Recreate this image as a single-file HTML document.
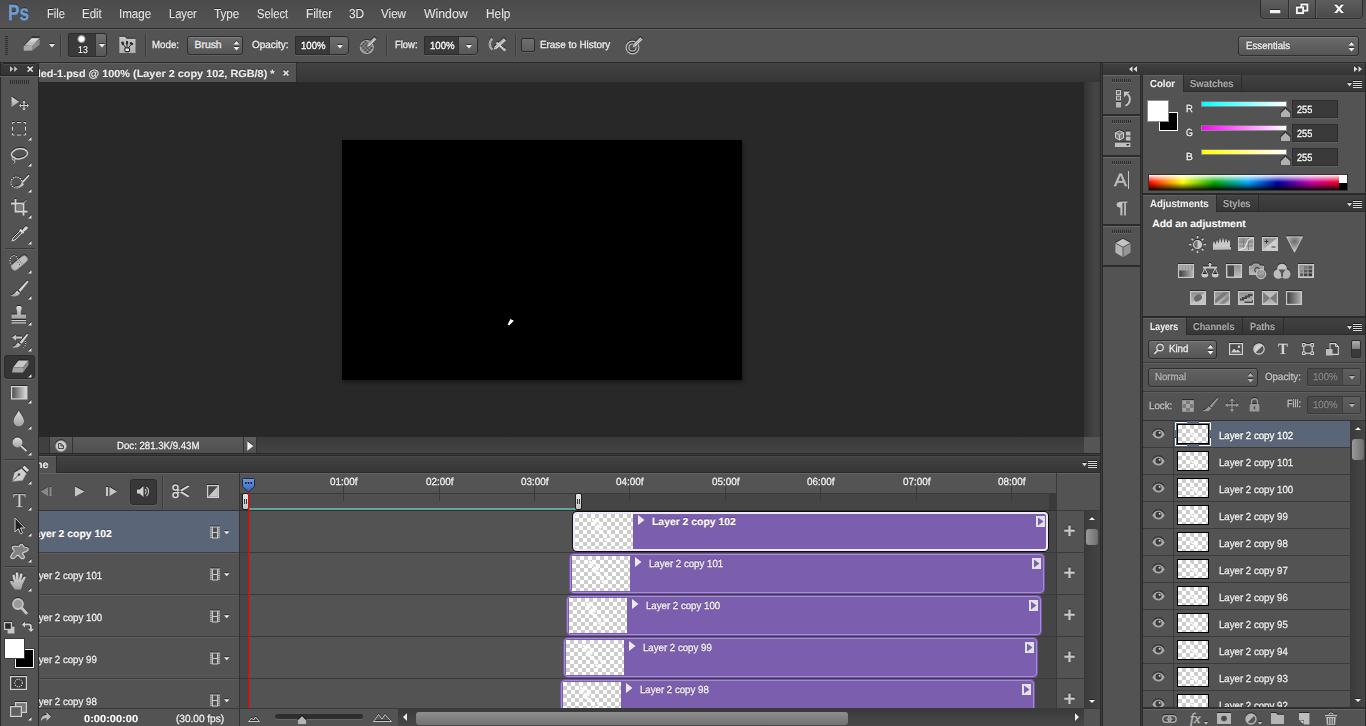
<!DOCTYPE html>
<html lang="en">
<head>
<meta charset="utf-8">
<title>Adobe Photoshop - Timeline</title>
<style>
*{box-sizing:border-box;margin:0;padding:0}
html,body{width:1366px;height:726px;overflow:hidden;background:#535353}
body{position:relative;font-family:"Liberation Sans",sans-serif;font-size:11px;line-height:13px;color:#f0f0f0;-webkit-font-smoothing:antialiased}
div,span,svg{position:absolute}
.t{white-space:nowrap;transform-origin:0 0;color:#f0f0f0;text-rendering:geometricPrecision;-webkit-text-stroke:.3px currentColor}
.t.b{-webkit-text-stroke:.12px currentColor}
.b{font-weight:bold}
svg{filter:drop-shadow(0 -1px 0 rgba(0,0,0,.5))}
.t{text-shadow:0 -1px 0 rgba(0,0,0,.45)}
.dim{color:#a6a6a6}
#menubar{left:0;top:0;width:1366px;height:28px;background:linear-gradient(#4b4b4b,#545454)}
#menubar .m{-webkit-text-stroke:.1px currentColor}
#optionsbar{left:0;top:28px;width:1366px;height:35px;background:#535353;border-top:1px solid #2c2c2c;border-bottom:1px solid #2a2a2a;box-shadow:inset 0 1px 0 #646464}
.sep{width:1px;background:#3c3c3c;box-shadow:1px 0 0 #5d5d5d}
.dd{border:1px solid #2e2e2e;border-radius:3px;background:linear-gradient(#6b6b6b,#555555);box-shadow:inset 0 1px 0 #7d7d7d,0 1px 0 #5e5e5e}
.field{background:#3a3a3a;border:1px solid #2e2e2e;box-shadow:0 1px 0 #5e5e5e}
.tabbar{background:linear-gradient(#424242,#363636)}
.tab{background:#535353;border:1px solid #2c2c2c;border-bottom:none;box-shadow:inset 0 1px 0 #646464}
.panel{background:#535353}
#toolbox{left:0;top:63px;width:39px;height:663px;background:#535353;border-right:1px solid #2a2a2a;border-left:1px solid #2a2a2a}
#doc{left:39px;top:63px;width:1061px;height:393px;background:#282828}
#timeline{left:39px;top:456px;width:1061px;height:270px;background:#535353;overflow:hidden}
#dock{left:1100px;top:63px;width:266px;height:663px;background:#2a2a2a}
</style>
</head>
<body>
<div id="menubar">
<span class="t b" style="left:7.5px;top:1px;font-size:22px;line-height:24px;transform:scaleX(0.78);color:#6e9dd4;-webkit-text-stroke:.4px #6e9dd4;">Ps</span>
<span class="t m" style="left:47.3px;top:6px;font-size:13px;line-height:15px;transform:scaleX(0.859);color:#e6e6e6;">File</span>
<span class="t m" style="left:82.4px;top:6px;font-size:13px;line-height:15px;transform:scaleX(0.884);color:#e6e6e6;">Edit</span>
<span class="t m" style="left:118.9px;top:6px;font-size:13px;line-height:15px;transform:scaleX(0.891);color:#e6e6e6;">Image</span>
<span class="t m" style="left:169.4px;top:6px;font-size:13px;line-height:15px;transform:scaleX(0.855);color:#e6e6e6;">Layer</span>
<span class="t m" style="left:214.2px;top:6px;font-size:13px;line-height:15px;transform:scaleX(0.898);color:#e6e6e6;">Type</span>
<span class="t m" style="left:257.1px;top:6px;font-size:13px;line-height:15px;transform:scaleX(0.863);color:#e6e6e6;">Select</span>
<span class="t m" style="left:306.4px;top:6px;font-size:13px;line-height:15px;transform:scaleX(0.907);color:#e6e6e6;">Filter</span>
<span class="t m" style="left:349.2px;top:6px;font-size:13px;line-height:15px;transform:scaleX(0.915);color:#e6e6e6;">3D</span>
<span class="t m" style="left:381.1px;top:6px;font-size:13px;line-height:15px;transform:scaleX(0.895);color:#e6e6e6;">View</span>
<span class="t m" style="left:424.2px;top:6px;font-size:13px;line-height:15px;transform:scaleX(0.943);color:#e6e6e6;">Window</span>
<span class="t m" style="left:485.6px;top:6px;font-size:13px;line-height:15px;transform:scaleX(0.913);color:#e6e6e6;">Help</span>
<div style="left:1260px;top:-1px;width:103px;height:20px;border:1px solid #2b2b2b;border-radius:0 0 4px 4px;background:linear-gradient(#5d5d5d,#4a4a4a);box-shadow:inset 0 -1px 0 #555,0 1px 0 #5c5c5c"></div>
<div style="left:1288px;top:0;width:1px;height:18px;background:#2e2e2e;box-shadow:1px 0 0 #626262"></div>
<div style="left:1315px;top:0;width:1px;height:18px;background:#2e2e2e;box-shadow:1px 0 0 #626262"></div>
<svg style="left:1262px;top:0px;" width="100" height="18" viewBox="0 0 100 18"><rect x="8" y="10" width="10.3" height="3.2" fill="#f4f4f4"/><rect x="39.4" y="4.4" width="6" height="6.2" fill="none" stroke="#f4f4f4" stroke-width="1.9"/><rect x="34.9" y="7.4" width="6.2" height="5.7" fill="#555" stroke="#f4f4f4" stroke-width="1.9"/><path d="M72 4.5h3l2 2.5 2-2.5h3l-3.5 4.3 3.5 4.3h-3l-2-2.5-2 2.5h-3l3.5-4.3z" fill="#f4f4f4"/></svg>
</div>
<div id="optionsbar">
<div style="left:5px;top:7px;width:3px;height:20px;background:repeating-linear-gradient(#2f2f2f 0 1px,transparent 1px 2px)"></div>
<svg style="left:22px;top:7px;" width="20" height="17" viewBox="0 0 20 17"><defs><linearGradient id="gE" x1="0" y1="0" x2="0" y2="1"><stop offset="0" stop-color="#e4e4e4"/><stop offset="1" stop-color="#b4b4b4"/></linearGradient></defs><path d="M9.8 2.1h7.7l-6.5 6.4h-7.7z" fill="url(#gE)"/><path d="M9.6 1.7h8.3" stroke="#333" stroke-width=".8"/><path d="M1.6 9.6l9.4-1.1-.6 6-8.8.3z" fill="#a9a9a9"/><path d="M11 8.5l7-5.5-.3 5.5-7.3 6z" fill="#8c8c8c"/><path d="M3.3 8.5h7.7l6.5-6.4" fill="none" stroke="#d8d8d8" stroke-width=".7"/></svg>
<svg style="left:49px;top:15px;" width="6" height="4" viewBox="0 0 6 4"><path d="M0 0h6l-3 3.5z" fill="#e6e6e6"/></svg>
<div class="sep" style="left:60px;top:5px;height:23px"></div>
<div style="left:68px;top:4px;width:39px;height:24px;border:1px solid #2b2b2b;border-radius:2px 3px 3px 2px;background:#3a3a3a;box-shadow:0 1px 0 #616161;overflow:hidden"><div style="left:26px;top:0;width:12px;height:22px;background:linear-gradient(#6e6e6e,#585858);border-left:1px solid #333"></div></div>
<div style="left:77.2px;top:5.5px;width:8.5px;height:8.5px;border-radius:50%;background:radial-gradient(circle,#fff 35%,rgba(255,255,255,.6) 55%,rgba(255,255,255,0) 74%)"></div>
<span class="t" style="left:77.6px;top:16px;font-size:10px;line-height:12px;transform:scaleX(0.881);color:#fff;-webkit-text-stroke:.1px #fff;">13</span>
<svg style="left:98.5px;top:14.5px;" width="6" height="4" viewBox="0 0 6 4"><path d="M0 0h6l-3 3.5z" fill="#f0f0f0"/></svg>
<svg style="left:118.5px;top:7px;" width="17" height="18" viewBox="0 0 17 18"><defs><linearGradient id="gF" x1="0" y1="0" x2="0" y2="1"><stop offset="0" stop-color="#c6c6c6"/><stop offset="1" stop-color="#b0b0b0"/></linearGradient></defs><path d="M.3 .8h5.7l1.6 1.9h9v14.3h-16.3z" fill="url(#gF)"/><g fill="#262626"><ellipse cx="3.7" cy="7.3" rx="1.3" ry="1.9" transform="rotate(-25 3.7 7.3)"/><ellipse cx="8" cy="6.8" rx="1.1" ry="2.1"/><ellipse cx="12.4" cy="7.6" rx="1.9" ry="1.3" transform="rotate(25 12.4 7.6)"/></g><path d="M4.3 8.5l3 3.8M8 8.5v3.5M11.8 8.8l-2.8 3.5" stroke="#262626" stroke-width="1"/><rect x="5.9" y="12" width="4.6" height="3.6" rx=".8" fill="#eee" stroke="#262626" stroke-width="1.1"/></svg>
<div class="sep" style="left:145px;top:5px;height:23px"></div>
<span class="t" style="left:152.3px;top:11px;font-size:10.4px;line-height:12px;transform:scaleX(0.936);">Mode:</span>
<div class="dd" style="left:187px;top:7px;width:56px;height:19px"></div>
<span class="t" style="left:194.5px;top:11px;font-size:10.4px;line-height:12px;">Brush</span>
<svg style="left:232.5px;top:12px;" width="7" height="10" viewBox="0 0 7 10"><path d="M0.5 3.5h6l-3-3.5z M0.5 6h6l-3 3.5z" fill="#f0f0f0"/></svg>
<span class="t" style="left:252px;top:11px;font-size:10.4px;line-height:12px;transform:scaleX(0.959);">Opacity:</span>
<div style="left:295px;top:7px;width:54px;height:19px;border:1px solid #2b2b2b;border-radius:1px 4px 4px 1px;background:#3a3a3a;box-shadow:0 1px 0 #616161;overflow:hidden"><div style="left:33px;top:0;width:20px;height:17px;background:linear-gradient(#6e6e6e,#585858);border-left:1px solid #333"></div></div><span class="t" style="left:300.5px;top:12px;font-size:10.4px;line-height:12px;transform:scaleX(0.923);color:#fff;">100%</span><svg style="left:336.5px;top:15.5px;" width="6" height="4" viewBox="0 0 6 4"><path d="M0 0h6l-3 3.5z" fill="#f0f0f0"/></svg>
<svg style="left:358px;top:6px;" width="20" height="20" viewBox="0 0 20 20"><circle cx="8.8" cy="12" r="6.5" fill="#8a8a8a" stroke="#b5b5b5" stroke-width="1.1"/><path d="M4.5 8h2v2h-2zM8.5 8h2v2h-2zM6.5 10h2v2h-2zM10.5 10h2v2h-2zM4.5 12h2v2h-2zM8.5 12h2v2h-2zM6.5 14h2v2h-2zM10.5 14h2v2h-2zM2.5 10h2v2h-2zM12.5 12h2v2h-2zM6.5 6h2v2h-2zM8.5 16h2v2h-2z" fill="#4e4e4e"/><path d="M8.5 12.5l1-3.5 6.8-7 2.3 2.3-6.8 7z" fill="#c9c9c9" stroke="#4a4a4a" stroke-width=".6"/><path d="M10.5 9.5l6-6" stroke="#8e8e8e" stroke-width="1" stroke-dasharray="1 1"/></svg>
<div class="sep" style="left:386px;top:5px;height:23px"></div>
<span class="t" style="left:395px;top:11px;font-size:10.4px;line-height:12px;transform:scaleX(0.908);">Flow:</span>
<div style="left:424px;top:7px;width:54px;height:19px;border:1px solid #2b2b2b;border-radius:1px 4px 4px 1px;background:#3a3a3a;box-shadow:0 1px 0 #616161;overflow:hidden"><div style="left:33px;top:0;width:20px;height:17px;background:linear-gradient(#6e6e6e,#585858);border-left:1px solid #333"></div></div><span class="t" style="left:429.5px;top:12px;font-size:10.4px;line-height:12px;transform:scaleX(0.923);color:#fff;">100%</span><svg style="left:465.5px;top:15.5px;" width="6" height="4" viewBox="0 0 6 4"><path d="M0 0h6l-3 3.5z" fill="#f0f0f0"/></svg>
<svg style="left:487px;top:7px;" width="21" height="17" viewBox="0 0 21 17"><path d="M5.5 2.5a7 7 0 0 0 0 11" fill="none" stroke="#a4a4a4" stroke-width="2.6"/><path d="M6 14.3l1.5-4 9.2-8.3 2.6 2.6-9.2 8.3z" fill="#cdcdcd" stroke="#444" stroke-width=".6"/><path d="M8.5 11.5l8.5-8" stroke="#7c7c7c" stroke-width="1" stroke-dasharray="1 1"/><path d="M9.5 6.5l8 7.5" stroke="#d0d0d0" stroke-width="2"/><path d="M16 12.5l2.5 2" stroke="#bdbdbd" stroke-width="2.6"/></svg>
<div class="sep" style="left:515px;top:5px;height:23px"></div>
<div style="left:521px;top:9px;width:14px;height:14px;border:1px solid #2b2b2b;border-radius:2px;background:linear-gradient(#707070,#5e5e5e);box-shadow:0 1px 0 #616161"></div>
<span class="t" style="left:540.3px;top:11px;font-size:10.4px;line-height:12px;transform:scaleX(0.949);">Erase to History</span>
<svg style="left:624px;top:6px;" width="20" height="20" viewBox="0 0 20 20"><circle cx="8.5" cy="12.5" r="6.4" fill="none" stroke="#bdbdbd" stroke-width="1.2"/><circle cx="8.5" cy="12.5" r="3.5" fill="none" stroke="#bdbdbd" stroke-width="1.2"/><path d="M8 13l1.3-3.8 7-7.2 2.6 2.6-7.2 7z" fill="#cdcdcd" stroke="#444" stroke-width=".6"/><path d="M10.5 10.5l6.5-6.5" stroke="#7c7c7c" stroke-width="1" stroke-dasharray="1 1"/></svg>
<div class="dd" style="left:1238px;top:7px;width:121px;height:20px"></div>
<span class="t" style="left:1245.8px;top:12px;font-size:10.4px;line-height:12px;transform:scaleX(0.931);">Essentials</span>
<svg style="left:1348px;top:12.5px;" width="7" height="10" viewBox="0 0 7 10"><path d="M0.5 3.5h6l-3-3.5z M0.5 6h6l-3 3.5z" fill="#f0f0f0"/></svg>
</div>
<div id="doc">
<div class="tabbar" style="left:0px;top:0px;width:1062px;height:19px;"></div>
<div class="tab" style="left:-30px;top:0;width:288px;height:19px;border-top:none;border-left:none;border-right:1px solid #2f2f2f;background:#535353;box-shadow:inset 0 1px 0 #606060"></div>
<span class="t b" style="left:-26px;top:6px;font-size:10.4px;line-height:12px;transform:scaleX(1.047);color:#ededed;">Untitled-1.psd @ 100% (Layer 2 copy 102, RGB/8) *</span>
<svg style="left:244px;top:6.5px;" width="6" height="6" viewBox="0 0 6 6"><path d="M.6 .6l4.8 4.8M5.4 .6l-4.8 4.8" stroke="#e4e4e4" stroke-width="1.5"/></svg>
<div style="left:0px;top:19px;width:1045px;height:355px;background:#282828"></div>
<div style="left:1045px;top:19px;width:16px;height:355px;background:linear-gradient(90deg,#343434,#464646 75%,#404040)"></div>
<div style="left:303px;top:77px;width:400px;height:240px;background:#000;box-shadow:1px 2px 4px rgba(0,0,0,.45)"></div>
<svg style="left:468px;top:255px;filter:none;" width="8" height="8" viewBox="0 0 8 8"><path d="M3.4 .9l3.5 1.9-4.8 4.6-1.4-.9z" fill="#fff"/></svg>
<div style="left:0px;top:374px;width:1061px;height:16px;background:linear-gradient(#3a3a3a,#434343)"></div>
<div style="left:0px;top:374px;width:10px;height:16px;background:#404040"></div>
<div style="left:10px;top:374px;width:24px;height:16px;background:linear-gradient(#5a5a5a,#4e4e4e);border-left:1px solid #333;border-right:1px solid #333"></div>
<svg style="left:16px;top:376.5px;" width="12" height="12" viewBox="0 0 12 12"><circle cx="6" cy="6" r="5.5" fill="#d0d0d0" stroke="#8a8a8a" stroke-width=".8"/><path d="M3.5 3.5h2.5l2.5 2.5v2.5h-5z" fill="none" stroke="#444" stroke-width="1"/><path d="M6 3.5v2.5h2.5" fill="none" stroke="#444" stroke-width="1"/></svg>
<div style="left:34px;top:374px;width:171px;height:16px;background:linear-gradient(#5a5a5a,#505050);border-right:1px solid #333"></div>
<span class="t" style="left:78.2px;top:378px;font-size:10.4px;line-height:12px;transform:scaleX(0.927);color:#f2f2f2;">Doc: 281.3K/9.43M</span>
<div style="left:205px;top:374px;width:13px;height:16px;background:linear-gradient(#5e5e5e,#505050);border-right:1px solid #333"></div>
<svg style="left:207.5px;top:377.5px;" width="7" height="10" viewBox="0 0 7 10"><path d="M0.3 0.3l6 4.7-6 4.7z" fill="#f4f4f4"/></svg>
<div style="left:1045px;top:374px;width:16px;height:16px;background:#555"></div>
<div style="left:0px;top:390px;width:1061px;height:3px;background:#2a2a2a"></div>
<div style="left:0px;top:391px;width:1061px;height:1px;background:#3a3a3a"></div>
</div>
<div id="timeline">
<div class="tabbar" style="left:0px;top:0px;width:1062px;height:17px;border-bottom:1px solid #2a2a2a;border-top:1px solid #484848"></div>
<div class="tab" style="left:-30px;top:0;width:48px;height:17px;border-top:none"></div>
<span class="t b" style="left:-34.2px;top:4px;font-size:10.4px;line-height:12px;transform:scaleX(1.038);color:#ededed;">Timeline</span>
<svg style="left:1043px;top:3.5px;" width="15" height="10" viewBox="0 0 15 10"><path d="M0 3h5l-2.5 3.5z" fill="#d6d6d6"/><path d="M6 1.5h9M6 3.5h9M6 5.5h9M6 7.5h9" stroke="#d6d6d6" stroke-width="1"/></svg>
<div style="left:0px;top:17px;width:1062px;height:38px;background:#535353;border-top:1px solid #636363;border-bottom:1px solid #333"></div>
<svg style="left:0px;top:27px;" width="80" height="17" viewBox="0 0 80 17"><g fill="#c6c6c6"><path d="M2 8.5l7-4.5v9z" opacity=".55"/><rect x="10.5" y="4" width="2" height="9" opacity=".55"/><path d="M36 3.5l9.5 5-9.5 5z"/><rect x="67" y="4" width="2" height="9"/><path d="M70.5 4l7.5 4.5-7.5 4.5z"/></g></svg>
<div style="left:91px;top:23px;width:27px;height:26px;background:#383838;border:1px solid #2c2c2c;border-radius:3px;box-shadow:0 1px 0 #606060"></div>
<svg style="left:97px;top:29px;" width="14" height="13" viewBox="0 0 14 13"><path d="M1 4.5h2.5l4-3.5v11l-4-3.5h-2.5z" fill="#cfcfcf"/><path d="M9 4a3.5 3.5 0 0 1 0 5M10.5 2a6 6 0 0 1 0 9" fill="none" stroke="#cfcfcf" stroke-width="1.1"/></svg>
<div class="sep" style="left:123px;top:20px;height:33px"></div>
<svg style="left:132.5px;top:28px;" width="18" height="15" viewBox="0 0 18 15"><g fill="none" stroke="#d4d4d4" stroke-width="1.6"><circle cx="3.5" cy="3.5" r="2.5"/><circle cx="3.5" cy="11" r="2.5"/></g><path d="M5.5 4.5l12 7.5-1.5 1.3-11.5-6.8zM5.5 10l12-7.5-1.5-1.3-11.5 6.8z" fill="#d4d4d4"/></svg>
<svg style="left:168px;top:28.5px;" width="12" height="13" viewBox="0 0 12 13"><rect x=".6" y=".6" width="10.8" height="11.8" fill="#4a4a4a" stroke="#d0d0d0" stroke-width="1.2"/><path d="M1.2 11.8l9.6-10.6v10.6z" fill="#c8c8c8"/></svg>
<div style="left:200px;top:17px;width:1px;height:253px;background:#333"></div>
<div style="left:201px;top:17px;width:817px;height:21px;background:#545454;border-top:1px solid #636363"></div>
<div style="left:201px;top:37px;width:817px;height:18px;background:#454545;border-top:1px solid #3b3b3b"></div>
<div style="left:209px;top:38px;width:329px;height:17px;background:#4f4f4f"></div>
<div style="left:1010px;top:38px;width:8px;height:17px;background:#3a3a3a"></div>
<span class="t" style="left:291.3px;top:21px;font-size:10.4px;line-height:12px;transform:scaleX(0.953);color:#f2f2f2;">01:00f</span>
<div style="left:304px;top:30px;width:1px;height:15px;background:#3b3b3b"></div>
<span class="t" style="left:387.3px;top:21px;font-size:10.4px;line-height:12px;transform:scaleX(0.953);color:#f2f2f2;">02:00f</span>
<div style="left:400px;top:30px;width:1px;height:15px;background:#3b3b3b"></div>
<span class="t" style="left:482.3px;top:21px;font-size:10.4px;line-height:12px;transform:scaleX(0.953);color:#f2f2f2;">03:00f</span>
<div style="left:495px;top:30px;width:1px;height:15px;background:#3b3b3b"></div>
<span class="t" style="left:577.3px;top:21px;font-size:10.4px;line-height:12px;transform:scaleX(0.953);color:#f2f2f2;">04:00f</span>
<div style="left:590px;top:30px;width:1px;height:15px;background:#3b3b3b"></div>
<span class="t" style="left:673.3px;top:21px;font-size:10.4px;line-height:12px;transform:scaleX(0.953);color:#f2f2f2;">05:00f</span>
<div style="left:686px;top:30px;width:1px;height:15px;background:#3b3b3b"></div>
<span class="t" style="left:768.3px;top:21px;font-size:10.4px;line-height:12px;transform:scaleX(0.953);color:#f2f2f2;">06:00f</span>
<div style="left:781px;top:30px;width:1px;height:15px;background:#3b3b3b"></div>
<span class="t" style="left:864.3px;top:21px;font-size:10.4px;line-height:12px;transform:scaleX(0.953);color:#f2f2f2;">07:00f</span>
<div style="left:877px;top:30px;width:1px;height:15px;background:#3b3b3b"></div>
<span class="t" style="left:959.3px;top:21px;font-size:10.4px;line-height:12px;transform:scaleX(0.953);color:#f2f2f2;">08:00f</span>
<div style="left:972px;top:30px;width:1px;height:15px;background:#3b3b3b"></div>
<div style="left:201px;top:54px;width:817px;height:1px;background:#2e2e2e"></div>
<div style="left:209px;top:52px;width:329px;height:2px;background:#5fa79b"></div>
<div style="left:203px;top:37px;width:7px;height:17px;background:linear-gradient(#e6e6e6,#c4c4c4);border:1px solid #1e1e1e;border-radius:2px"></div>
<div style="left:205px;top:43px;width:3px;height:5px;border-left:1px solid #333;border-right:1px solid #333"></div>
<div style="left:536px;top:37px;width:7px;height:17px;background:linear-gradient(#e6e6e6,#c4c4c4);border:1px solid #1e1e1e;border-radius:2px"></div>
<div style="left:538px;top:43px;width:3px;height:5px;border-left:1px solid #333;border-right:1px solid #333"></div>
<div style="left:1017px;top:17px;width:1px;height:236px;background:#3a3a3a"></div>
<div style="left:1018px;top:17px;width:44px;height:38px;background:#535353;border-top:1px solid #636363;border-bottom:1px solid #3a3a3a"></div>
<div style="left:0px;top:55px;width:200px;height:41px;background:#5a6678"></div>
<div style="left:0px;top:96px;width:200px;height:1px;background:#3c3c3c"></div>
<span class="t b" style="left:-11px;top:73px;font-size:10.4px;line-height:12px;color:#fff;">Layer 2 copy 102</span>
<svg style="left:171px;top:69.5px;" width="20" height="13" viewBox="0 0 20 13"><rect x="2.5" y="1" width="5" height="11" fill="#4e4e4e" stroke="#c8c8c8" stroke-width="1"/><path d="M1 .5v12M9 .5v12" stroke="#c8c8c8" stroke-width="2" stroke-dasharray="1.2 .8"/><path d="M2.5 6.5h5" stroke="#c8c8c8" stroke-width="1"/><path d="M14 5.3h5.5l-2.75 3z" fill="#f0f0f0"/></svg>
<div style="left:201px;top:55px;width:8px;height:42px;background:#474747"></div>
<div style="left:209px;top:55px;width:808px;height:42px;background:#535353"></div>
<div style="left:201px;top:96px;width:817px;height:1px;background:#3a3a3a"></div>
<div style="left:1009px;top:55px;width:8px;height:41px;background:#454545"></div>
<div style="left:534px;top:56px;width:475px;height:39px;background:#7c5eae;border:2px solid #efe9fb;border-radius:4px;box-shadow:0 0 0 1px #0c0c0c;overflow:hidden"><div style="left:0px;top:0px;width:58px;height:35px;background-color:#fff;background-image:linear-gradient(45deg,#ccc 25%,transparent 25%,transparent 75%,#ccc 75%),linear-gradient(45deg,#ccc 25%,transparent 25%,transparent 75%,#ccc 75%);background-size:8px 8px;background-position:0 0,4px 4px;"></div><svg style="left:10px;top:2px;filter:none;" width="40" height="32" viewBox="0 0 40 32"><g fill="#fff" opacity=".92"><path d="M8 2l4 5-1.5 1.5-4-4.5zM14 4l3 6-2 1-2.5-6zM10 11l8 4-1.5 2-7.5-4zM17 14l5 7-2 1.5-4.5-7zM20 22l4 3-1.5 1.5-3.5-3zM24 16l3 5-1.5 1-2.5-5zM12 8l5 3-1 2-5-3z"/></g></svg></div>
<svg style="left:599px;top:58.8px;filter:none;" width="7" height="10" viewBox="0 0 7 10"><path d="M0 0l6.5 5-6.5 5z" fill="#ececec"/></svg>
<span class="t b" style="left:613px;top:61px;font-size:10.4px;line-height:12px;color:#fff;">Layer 2 copy 102</span>
<svg style="left:997px;top:60px;filter:none;" width="9" height="11" viewBox="0 0 9 11"><rect width="9" height="11" fill="#e2e2e2"/><path d="M2 1.5l5.5 4-5.5 4z" fill="#7c5eae"/></svg>
<div style="left:1018px;top:55px;width:27px;height:41px;background:#535353"></div>
<div style="left:1018px;top:96px;width:27px;height:1px;background:#3a3a3a"></div>
<svg style="left:1025px;top:69px;" width="11" height="11" viewBox="0 0 11 11"><path d="M5.5 .5v10.5M.3 5.7h10.4" stroke="#c8c8c8" stroke-width="2.3"/></svg>
<div style="left:0px;top:97px;width:200px;height:41px;background:#535353"></div>
<div style="left:0px;top:138px;width:200px;height:1px;background:#3c3c3c"></div>
<div style="left:0px;top:97px;width:200px;height:1px;background:#5f5f5f"></div>
<span class="t" style="left:-11px;top:115px;font-size:10.4px;line-height:12px;transform:scaleX(0.93);color:#f0f0f0;">Layer 2 copy 101</span>
<svg style="left:171px;top:111.5px;" width="20" height="13" viewBox="0 0 20 13"><rect x="2.5" y="1" width="5" height="11" fill="#4e4e4e" stroke="#c8c8c8" stroke-width="1"/><path d="M1 .5v12M9 .5v12" stroke="#c8c8c8" stroke-width="2" stroke-dasharray="1.2 .8"/><path d="M2.5 6.5h5" stroke="#c8c8c8" stroke-width="1"/><path d="M14 5.3h5.5l-2.75 3z" fill="#f0f0f0"/></svg>
<div style="left:201px;top:97px;width:8px;height:42px;background:#474747"></div>
<div style="left:209px;top:97px;width:808px;height:42px;background:#535353"></div>
<div style="left:201px;top:138px;width:817px;height:1px;background:#3a3a3a"></div>
<div style="left:1005px;top:97px;width:12px;height:41px;background:#454545"></div>
<div style="left:531px;top:98px;width:474px;height:39px;background:#7c5eae;border:1px solid #a58dd6;border-radius:4px;box-shadow:0 0 0 1px #7556a8;overflow:hidden"><div style="left:1px;top:1px;width:58px;height:35px;background-color:#fff;background-image:linear-gradient(45deg,#ccc 25%,transparent 25%,transparent 75%,#ccc 75%),linear-gradient(45deg,#ccc 25%,transparent 25%,transparent 75%,#ccc 75%);background-size:8px 8px;background-position:0 0,4px 4px;"></div><svg style="left:11px;top:3px;filter:none;" width="40" height="32" viewBox="0 0 40 32"><g fill="#fff" opacity=".92"><path d="M8 2l4 5-1.5 1.5-4-4.5zM14 4l3 6-2 1-2.5-6zM10 11l8 4-1.5 2-7.5-4zM17 14l5 7-2 1.5-4.5-7zM20 22l4 3-1.5 1.5-3.5-3zM24 16l3 5-1.5 1-2.5-5zM12 8l5 3-1 2-5-3z"/></g></svg></div>
<svg style="left:596px;top:100.8px;filter:none;" width="7" height="10" viewBox="0 0 7 10"><path d="M0 0l6.5 5-6.5 5z" fill="#ececec"/></svg>
<span class="t" style="left:610px;top:103px;font-size:10.4px;line-height:12px;transform:scaleX(0.93);color:#f4f4f4;">Layer 2 copy 101</span>
<svg style="left:993px;top:102px;filter:none;" width="9" height="11" viewBox="0 0 9 11"><rect width="9" height="11" fill="#e2e2e2"/><path d="M2 1.5l5.5 4-5.5 4z" fill="#7c5eae"/></svg>
<div style="left:1018px;top:97px;width:27px;height:41px;background:#535353"></div>
<div style="left:1018px;top:138px;width:27px;height:1px;background:#3a3a3a"></div>
<svg style="left:1025px;top:111px;" width="11" height="11" viewBox="0 0 11 11"><path d="M5.5 .5v10.5M.3 5.7h10.4" stroke="#c8c8c8" stroke-width="2.3"/></svg>
<div style="left:0px;top:139px;width:200px;height:41px;background:#535353"></div>
<div style="left:0px;top:180px;width:200px;height:1px;background:#3c3c3c"></div>
<div style="left:0px;top:139px;width:200px;height:1px;background:#5f5f5f"></div>
<span class="t" style="left:-11px;top:157px;font-size:10.4px;line-height:12px;transform:scaleX(0.93);color:#f0f0f0;">Layer 2 copy 100</span>
<svg style="left:171px;top:153.5px;" width="20" height="13" viewBox="0 0 20 13"><rect x="2.5" y="1" width="5" height="11" fill="#4e4e4e" stroke="#c8c8c8" stroke-width="1"/><path d="M1 .5v12M9 .5v12" stroke="#c8c8c8" stroke-width="2" stroke-dasharray="1.2 .8"/><path d="M2.5 6.5h5" stroke="#c8c8c8" stroke-width="1"/><path d="M14 5.3h5.5l-2.75 3z" fill="#f0f0f0"/></svg>
<div style="left:201px;top:139px;width:8px;height:42px;background:#474747"></div>
<div style="left:209px;top:139px;width:808px;height:42px;background:#535353"></div>
<div style="left:201px;top:180px;width:817px;height:1px;background:#3a3a3a"></div>
<div style="left:1002px;top:139px;width:15px;height:41px;background:#454545"></div>
<div style="left:528px;top:140px;width:474px;height:39px;background:#7c5eae;border:1px solid #a58dd6;border-radius:4px;box-shadow:0 0 0 1px #7556a8;overflow:hidden"><div style="left:1px;top:1px;width:58px;height:35px;background-color:#fff;background-image:linear-gradient(45deg,#ccc 25%,transparent 25%,transparent 75%,#ccc 75%),linear-gradient(45deg,#ccc 25%,transparent 25%,transparent 75%,#ccc 75%);background-size:8px 8px;background-position:0 0,4px 4px;"></div><svg style="left:11px;top:3px;filter:none;" width="40" height="32" viewBox="0 0 40 32"><g fill="#fff" opacity=".92"><path d="M8 2l4 5-1.5 1.5-4-4.5zM14 4l3 6-2 1-2.5-6zM10 11l8 4-1.5 2-7.5-4zM17 14l5 7-2 1.5-4.5-7zM20 22l4 3-1.5 1.5-3.5-3zM24 16l3 5-1.5 1-2.5-5zM12 8l5 3-1 2-5-3z"/></g></svg></div>
<svg style="left:593px;top:142.8px;filter:none;" width="7" height="10" viewBox="0 0 7 10"><path d="M0 0l6.5 5-6.5 5z" fill="#ececec"/></svg>
<span class="t" style="left:607px;top:145px;font-size:10.4px;line-height:12px;transform:scaleX(0.93);color:#f4f4f4;">Layer 2 copy 100</span>
<svg style="left:990px;top:144px;filter:none;" width="9" height="11" viewBox="0 0 9 11"><rect width="9" height="11" fill="#e2e2e2"/><path d="M2 1.5l5.5 4-5.5 4z" fill="#7c5eae"/></svg>
<div style="left:1018px;top:139px;width:27px;height:41px;background:#535353"></div>
<div style="left:1018px;top:180px;width:27px;height:1px;background:#3a3a3a"></div>
<svg style="left:1025px;top:153px;" width="11" height="11" viewBox="0 0 11 11"><path d="M5.5 .5v10.5M.3 5.7h10.4" stroke="#c8c8c8" stroke-width="2.3"/></svg>
<div style="left:0px;top:181px;width:200px;height:41px;background:#535353"></div>
<div style="left:0px;top:222px;width:200px;height:1px;background:#3c3c3c"></div>
<div style="left:0px;top:181px;width:200px;height:1px;background:#5f5f5f"></div>
<span class="t" style="left:-11px;top:199px;font-size:10.4px;line-height:12px;transform:scaleX(0.93);color:#f0f0f0;">Layer 2 copy 99</span>
<svg style="left:171px;top:195.5px;" width="20" height="13" viewBox="0 0 20 13"><rect x="2.5" y="1" width="5" height="11" fill="#4e4e4e" stroke="#c8c8c8" stroke-width="1"/><path d="M1 .5v12M9 .5v12" stroke="#c8c8c8" stroke-width="2" stroke-dasharray="1.2 .8"/><path d="M2.5 6.5h5" stroke="#c8c8c8" stroke-width="1"/><path d="M14 5.3h5.5l-2.75 3z" fill="#f0f0f0"/></svg>
<div style="left:201px;top:181px;width:8px;height:42px;background:#474747"></div>
<div style="left:209px;top:181px;width:808px;height:42px;background:#535353"></div>
<div style="left:201px;top:222px;width:817px;height:1px;background:#3a3a3a"></div>
<div style="left:998px;top:181px;width:19px;height:41px;background:#454545"></div>
<div style="left:525px;top:182px;width:473px;height:39px;background:#7c5eae;border:1px solid #a58dd6;border-radius:4px;box-shadow:0 0 0 1px #7556a8;overflow:hidden"><div style="left:1px;top:1px;width:58px;height:35px;background-color:#fff;background-image:linear-gradient(45deg,#ccc 25%,transparent 25%,transparent 75%,#ccc 75%),linear-gradient(45deg,#ccc 25%,transparent 25%,transparent 75%,#ccc 75%);background-size:8px 8px;background-position:0 0,4px 4px;"></div><svg style="left:11px;top:3px;filter:none;" width="40" height="32" viewBox="0 0 40 32"><g fill="#fff" opacity=".92"><path d="M8 2l4 5-1.5 1.5-4-4.5zM14 4l3 6-2 1-2.5-6zM10 11l8 4-1.5 2-7.5-4zM17 14l5 7-2 1.5-4.5-7zM20 22l4 3-1.5 1.5-3.5-3zM24 16l3 5-1.5 1-2.5-5zM12 8l5 3-1 2-5-3z"/></g></svg></div>
<svg style="left:590px;top:184.8px;filter:none;" width="7" height="10" viewBox="0 0 7 10"><path d="M0 0l6.5 5-6.5 5z" fill="#ececec"/></svg>
<span class="t" style="left:604px;top:187px;font-size:10.4px;line-height:12px;transform:scaleX(0.93);color:#f4f4f4;">Layer 2 copy 99</span>
<svg style="left:986px;top:186px;filter:none;" width="9" height="11" viewBox="0 0 9 11"><rect width="9" height="11" fill="#e2e2e2"/><path d="M2 1.5l5.5 4-5.5 4z" fill="#7c5eae"/></svg>
<div style="left:1018px;top:181px;width:27px;height:41px;background:#535353"></div>
<div style="left:1018px;top:222px;width:27px;height:1px;background:#3a3a3a"></div>
<svg style="left:1025px;top:195px;" width="11" height="11" viewBox="0 0 11 11"><path d="M5.5 .5v10.5M.3 5.7h10.4" stroke="#c8c8c8" stroke-width="2.3"/></svg>
<div style="left:0px;top:223px;width:200px;height:29px;background:#535353"></div>
<div style="left:0px;top:264px;width:200px;height:1px;background:#3c3c3c"></div>
<div style="left:0px;top:223px;width:200px;height:1px;background:#5f5f5f"></div>
<span class="t" style="left:-11px;top:241px;font-size:10.4px;line-height:12px;transform:scaleX(0.93);color:#f0f0f0;">Layer 2 copy 98</span>
<svg style="left:171px;top:237.5px;" width="20" height="13" viewBox="0 0 20 13"><rect x="2.5" y="1" width="5" height="11" fill="#4e4e4e" stroke="#c8c8c8" stroke-width="1"/><path d="M1 .5v12M9 .5v12" stroke="#c8c8c8" stroke-width="2" stroke-dasharray="1.2 .8"/><path d="M2.5 6.5h5" stroke="#c8c8c8" stroke-width="1"/><path d="M14 5.3h5.5l-2.75 3z" fill="#f0f0f0"/></svg>
<div style="left:201px;top:223px;width:8px;height:30px;background:#474747"></div>
<div style="left:209px;top:223px;width:808px;height:30px;background:#535353"></div>
<div style="left:201px;top:264px;width:817px;height:1px;background:#3a3a3a"></div>
<div style="left:995px;top:223px;width:22px;height:29px;background:#454545"></div>
<div style="left:522px;top:224px;width:473px;height:39px;background:#7c5eae;border:1px solid #a58dd6;border-radius:4px;box-shadow:0 0 0 1px #7556a8;overflow:hidden"><div style="left:1px;top:1px;width:58px;height:35px;background-color:#fff;background-image:linear-gradient(45deg,#ccc 25%,transparent 25%,transparent 75%,#ccc 75%),linear-gradient(45deg,#ccc 25%,transparent 25%,transparent 75%,#ccc 75%);background-size:8px 8px;background-position:0 0,4px 4px;"></div><svg style="left:11px;top:3px;filter:none;" width="40" height="32" viewBox="0 0 40 32"><g fill="#fff" opacity=".92"><path d="M8 2l4 5-1.5 1.5-4-4.5zM14 4l3 6-2 1-2.5-6zM10 11l8 4-1.5 2-7.5-4zM17 14l5 7-2 1.5-4.5-7zM20 22l4 3-1.5 1.5-3.5-3zM24 16l3 5-1.5 1-2.5-5zM12 8l5 3-1 2-5-3z"/></g></svg></div>
<svg style="left:587px;top:226.8px;filter:none;" width="7" height="10" viewBox="0 0 7 10"><path d="M0 0l6.5 5-6.5 5z" fill="#ececec"/></svg>
<span class="t" style="left:601px;top:229px;font-size:10.4px;line-height:12px;transform:scaleX(0.93);color:#f4f4f4;">Layer 2 copy 98</span>
<svg style="left:983px;top:228px;filter:none;" width="9" height="11" viewBox="0 0 9 11"><rect width="9" height="11" fill="#e2e2e2"/><path d="M2 1.5l5.5 4-5.5 4z" fill="#7c5eae"/></svg>
<div style="left:1018px;top:223px;width:27px;height:29px;background:#535353"></div>
<div style="left:1018px;top:264px;width:27px;height:1px;background:#3a3a3a"></div>
<svg style="left:1025px;top:237px;" width="11" height="11" viewBox="0 0 11 11"><path d="M5.5 .5v10.5M.3 5.7h10.4" stroke="#c8c8c8" stroke-width="2.3"/></svg>
<div style="left:209px;top:35px;width:1px;height:218px;background:#f40000;box-shadow:1px 0 0 rgba(255,0,0,.28)"></div>
<svg style="left:203px;top:21.5px;filter:none;" width="13" height="15" viewBox="0 0 13 15"><defs><linearGradient id="gP" x1="0" y1="0" x2="0" y2="1"><stop offset="0" stop-color="#6f9be0"/><stop offset="1" stop-color="#3a63b4"/></linearGradient></defs><path d="M1.5 .5h10a1 1 0 0 1 1 1v7l-6 5.5-6-5.5v-7a1 1 0 0 1 1-1z" fill="url(#gP)" stroke="#1c2a4a" stroke-width="1"/><path d="M3 4h1.5v2h-1.5zM5.75 4h1.5v2h-1.5zM8.5 4h1.5v2h-1.5z" fill="#14203c"/></svg>
<div style="left:1045px;top:55px;width:16px;height:198px;background:linear-gradient(90deg,#3a3a3a,#444)"></div>
<svg style="left:1050px;top:61px;" width="6" height="3" viewBox="0 0 6 3"><path d="M0 3h6l-3-3z" fill="#f4f4f4"/></svg>
<svg style="left:1050px;top:244px;" width="6" height="3" viewBox="0 0 6 3"><path d="M0 0h6l-3 3z" fill="#f4f4f4"/></svg>
<div style="left:1047px;top:73px;width:12px;height:16px;background:linear-gradient(90deg,#999,#6e6e6e);border-radius:3px"></div>
<div style="left:0px;top:252px;width:1062px;height:1px;background:#3a3a3a"></div>
<div style="left:0px;top:253px;width:1062px;height:17px;background:#535353"></div>
<svg style="left:1px;top:255px;" width="11" height="11" viewBox="0 0 11 11"><path d="M1 10c0-4 2-6 5.5-6v-3l4.5 4.5-4.5 4.5v-3c-2.5 0-4 1-5.5 3z" fill="#bdbdbd"/></svg>
<span class="t b" style="left:44.5px;top:258px;font-size:10.4px;line-height:12px;transform:scaleX(1.064);color:#fff;">0:00:00:00</span>
<span class="t" style="left:137px;top:258px;font-size:10.4px;line-height:12px;transform:scaleX(0.968);color:#f0f0f0;">(30.00 fps)</span>
<div style="left:200px;top:253px;width:1px;height:17px;background:#333"></div>
<svg style="left:209px;top:257px;" width="12" height="9" viewBox="0 0 12 9"><path d="M.5 8.5l3-3.5 2 2 2-3 4 4.5z" fill="none" stroke="#c8c8c8" stroke-width="1"/></svg>
<div style="left:236px;top:258px;width:88px;height:5px;background:#2e2e2e;border-radius:3px;box-shadow:0 1px 0 #686868"></div>
<svg style="left:257.5px;top:259.5px;" width="10" height="9" viewBox="0 0 10 9"><path d="M5 0l4.5 4.5v4h-9v-4z" fill="#b4b4b4" stroke="#444" stroke-width=".6"/></svg>
<svg style="left:334px;top:257px;" width="19" height="9" viewBox="0 0 19 9"><path d="M.5 8.5l5-7 3.5 4.5 3-4.5 6.5 7z" fill="none" stroke="#c8c8c8" stroke-width="1"/></svg>
<div style="left:359px;top:253px;width:686px;height:17px;background:linear-gradient(#3a3a3a,#484848)"></div>
<svg style="left:364px;top:257px;" width="4" height="8" viewBox="0 0 4 8"><path d="M4 0v8l-4-4z" fill="#f0f0f0"/></svg>
<svg style="left:1036px;top:257px;" width="4" height="8" viewBox="0 0 4 8"><path d="M0 0v8l4-4z" fill="#f0f0f0"/></svg>
<div style="left:377px;top:256px;width:432px;height:13px;background:linear-gradient(#8e8e8e,#727272);border-radius:3px"></div>
</div>
<div id="dock">
<div style="left:1px;top:0px;width:1px;height:663px;background:#3c3c3c"></div>
<div style="left:3px;top:0px;width:262px;height:12px;background:linear-gradient(#404040,#343434);border-top:1px solid #4a4a4a"></div>
<svg style="left:28.5px;top:2.5px;" width="8" height="6" viewBox="0 0 8 6"><path d="M3.5 0v6l-3.5-3zM8 0v6l-3.5-3z" fill="#dcdcdc"/></svg>
<svg style="left:254px;top:3px;" width="8" height="6" viewBox="0 0 8 6"><path d="M0 0v6l3.5-3zM4.5 0v6l3.5-3z" fill="#dcdcdc"/></svg>
<div style="left:3px;top:12px;width:37px;height:651px;background:#535353"></div>
<div style="left:40px;top:12px;width:3px;height:651px;background:#2b2b2b"></div>
<div style="left:41px;top:12px;width:1px;height:651px;background:#3a3a3a"></div>
<div style="left:3px;top:12px;width:37px;height:1px;background:#676767"></div>
<div style="left:3px;top:51px;width:37px;height:2px;background:#2c2c2c"></div>
<div style="left:12px;top:16px;width:19px;height:3px;background:repeating-linear-gradient(90deg,#2f2f2f 0 1px,transparent 1px 2px)"></div>
<div style="left:12px;top:19px;width:19px;height:1px;background:repeating-linear-gradient(90deg,#6c6c6c 0 1px,transparent 1px 2px)"></div>
<div style="left:3px;top:53px;width:37px;height:1px;background:#676767"></div>
<div style="left:3px;top:92px;width:37px;height:2px;background:#2c2c2c"></div>
<div style="left:12px;top:57px;width:19px;height:3px;background:repeating-linear-gradient(90deg,#2f2f2f 0 1px,transparent 1px 2px)"></div>
<div style="left:12px;top:60px;width:19px;height:1px;background:repeating-linear-gradient(90deg,#6c6c6c 0 1px,transparent 1px 2px)"></div>
<div style="left:3px;top:94px;width:37px;height:1px;background:#676767"></div>
<div style="left:3px;top:161px;width:37px;height:2px;background:#2c2c2c"></div>
<div style="left:12px;top:98px;width:19px;height:3px;background:repeating-linear-gradient(90deg,#2f2f2f 0 1px,transparent 1px 2px)"></div>
<div style="left:12px;top:101px;width:19px;height:1px;background:repeating-linear-gradient(90deg,#6c6c6c 0 1px,transparent 1px 2px)"></div>
<div style="left:3px;top:163px;width:37px;height:1px;background:#676767"></div>
<div style="left:3px;top:202px;width:37px;height:2px;background:#2c2c2c"></div>
<div style="left:12px;top:167px;width:19px;height:3px;background:repeating-linear-gradient(90deg,#2f2f2f 0 1px,transparent 1px 2px)"></div>
<div style="left:12px;top:170px;width:19px;height:1px;background:repeating-linear-gradient(90deg,#6c6c6c 0 1px,transparent 1px 2px)"></div>
<svg style="left:16px;top:26.5px;" width="16" height="18" viewBox="0 0 16 18"><rect x=".5" y=".5" width="4" height="4" fill="#6a6a6a" stroke="#c8c8c8"/><rect x=".5" y="6" width="4" height="4" fill="#6a6a6a" stroke="#c8c8c8"/><rect y="12" width="5" height="5.5" fill="#b4b4b4"/><path d="M8 1.5h6l-6 5.8z" fill="#c6c6c6"/><path d="M11.5 4c3.5 3 3.5 8.5-2 11.8" fill="none" stroke="#c6c6c6" stroke-width="1.9"/></svg>
<svg style="left:15px;top:66.5px;" width="16" height="18" viewBox="0 0 16 18"><path d="M4.5 .8l4 1.8v5.2l-4 2.2-4-2.2v-5.2z" fill="#7a7a7a" stroke="#d0d0d0" stroke-width="1"/><path d="M.5 2.6l4 2.2 4-2.2M4.5 4.8v5.2" fill="none" stroke="#d0d0d0" stroke-width="1"/><rect x="11" y="1.5" width="4.5" height="4" fill="#c0c0c0"/><rect x="11" y="6.5" width="4.5" height="4" fill="#c0c0c0"/><rect x="0" y="12.5" width="15.5" height="4.5" fill="#c0c0c0"/><path d="M11 14h3.5l-1.75 2z" fill="#2a2a2a"/></svg>
<span class="t" style="left:14.4px;top:107px;font-size:18px;line-height:20px;transform:scaleX(1.083);color:#bdbdbd;-webkit-text-stroke:.5px #bdbdbd;">A</span>
<div style="left:28px;top:108px;width:1px;height:18px;background:#c4c4c4"></div>
<span class="t" style="left:15.5px;top:136px;font-size:16.5px;line-height:18px;transform:scaleX(1.354);color:#c4c4c4;-webkit-text-stroke:.4px #c4c4c4;">¶</span>
<svg style="left:14px;top:175px;" width="18" height="20" viewBox="0 0 18 20"><path d="M9 .8l7.7 4.2-7.7 4.3-7.7-4.3z" fill="#c4c4c4"/><path d="M1.3 5l7.7 4.3v9.9l-7.7-4.7z" fill="#b4b4b4"/><path d="M16.7 5l-7.7 4.3v9.9l7.7-4.7z" fill="#969696"/><path d="M1.3 5l7.7 4.3 7.7-4.3M9 9.3v9.9" fill="none" stroke="#5a5a5a" stroke-width="1"/></svg>
<div class="panel" style="left:43px;top:12px;width:222px;height:118px;"></div>
<div class="tabbar" style="left:43px;top:12px;width:222px;height:17px;border-bottom:1px solid #2c2c2c"></div><div style="left:43px;top:12px;width:41px;height:17px;background:#535353;border-right:1px solid #2c2c2c;box-shadow:inset 0 1px 0 #626262"></div><span class="t b" style="left:50px;top:16px;font-size:10.4px;line-height:12px;transform:scaleX(0.923);color:#f0f0f0;">Color</span><div style="left:84px;top:12px;width:58px;height:16px;border-right:1px solid #2c2c2c;box-shadow:inset 0 1px 0 #4a4a4a"></div><span class="t b" style="left:90.2px;top:16px;font-size:10.4px;line-height:12px;transform:scaleX(0.909);color:#a9a9a9;">Swatches</span><svg style="left:247px;top:17px;" width="15" height="9" viewBox="0 0 15 9"><path d="M0 3h5l-2.5 3.5z" fill="#d6d6d6"/><path d="M6 1.5h9M6 3.5h9M6 5.5h9M6 7.5h9" stroke="#d6d6d6" stroke-width="1"/></svg>
<div style="left:59px;top:49px;width:19px;height:19px;background:#000;border:1px solid #fff"></div>
<div style="left:47px;top:37px;width:22px;height:22px;background:#fff;border:1px solid #8c8c8c;box-shadow:inset 0 0 0 1px #fff"></div>
<span class="t" style="left:86.1px;top:41px;font-size:10.4px;line-height:12px;transform:scaleX(0.908);color:#f0f0f0;">R</span>
<div style="left:101px;top:38px;width:86px;height:6px;background:linear-gradient(90deg,#00ffff,#fff);border:1px solid #8a8a8a;border-top-color:#777"></div>
<svg style="left:180px;top:44.5px;" width="11" height="10" viewBox="0 0 11 10"><path d="M5.5 .4l5 4.6v4.5h-10v-4.5z" fill="#b0b0b0" stroke="#3c3c3c" stroke-width=".7"/></svg>
<div style="left:192px;top:37px;width:46px;height:18px;background:#3a3a3a;border:1px solid #2e2e2e;box-shadow:0 1px 0 #606060"></div>
<span class="t" style="left:197px;top:42px;font-size:10.4px;line-height:12px;transform:scaleX(0.878);color:#fff;">255</span>
<span class="t" style="left:86.1px;top:65px;font-size:10.4px;line-height:12px;transform:scaleX(0.843);color:#f0f0f0;">G</span>
<div style="left:101px;top:62px;width:86px;height:6px;background:linear-gradient(90deg,#ff00ff,#fff);border:1px solid #8a8a8a;border-top-color:#777"></div>
<svg style="left:180px;top:68.5px;" width="11" height="10" viewBox="0 0 11 10"><path d="M5.5 .4l5 4.6v4.5h-10v-4.5z" fill="#b0b0b0" stroke="#3c3c3c" stroke-width=".7"/></svg>
<div style="left:192px;top:61px;width:46px;height:18px;background:#3a3a3a;border:1px solid #2e2e2e;box-shadow:0 1px 0 #606060"></div>
<span class="t" style="left:197px;top:66px;font-size:10.4px;line-height:12px;transform:scaleX(0.878);color:#fff;">255</span>
<span class="t" style="left:86.1px;top:89px;font-size:10.4px;line-height:12px;transform:scaleX(0.983);color:#f0f0f0;">B</span>
<div style="left:101px;top:86px;width:86px;height:6px;background:linear-gradient(90deg,#ffff00,#fff);border:1px solid #8a8a8a;border-top-color:#777"></div>
<svg style="left:180px;top:92.5px;" width="11" height="10" viewBox="0 0 11 10"><path d="M5.5 .4l5 4.6v4.5h-10v-4.5z" fill="#b0b0b0" stroke="#3c3c3c" stroke-width=".7"/></svg>
<div style="left:192px;top:85px;width:46px;height:18px;background:#3a3a3a;border:1px solid #2e2e2e;box-shadow:0 1px 0 #606060"></div>
<span class="t" style="left:197px;top:90px;font-size:10.4px;line-height:12px;transform:scaleX(0.878);color:#fff;">255</span>
<div style="left:48px;top:111px;width:200px;height:17px;border:1px solid #333;background:linear-gradient(180deg,rgba(255,255,255,.95) 0%,rgba(255,255,255,0) 48%,rgba(0,0,0,0) 52%,rgba(0,0,0,.9) 100%),linear-gradient(90deg,#f00 0%,#ff0 17%,#0a0 33%,#0af 50%,#00a 65%,#c0a 82%,#f00 100%)"></div>
<div style="left:239px;top:112px;width:8px;height:8px;background:#fff"></div>
<div style="left:239px;top:120px;width:8px;height:7px;background:#000"></div>
<div class="panel" style="left:43px;top:132px;width:222px;height:121px;"></div>
<div class="tabbar" style="left:43px;top:132px;width:222px;height:17px;border-bottom:1px solid #2c2c2c"></div><div style="left:43px;top:132px;width:74px;height:17px;background:#535353;border-right:1px solid #2c2c2c;box-shadow:inset 0 1px 0 #626262"></div><span class="t b" style="left:50px;top:136px;font-size:10.4px;line-height:12px;transform:scaleX(0.931);color:#f0f0f0;">Adjustments</span><div style="left:117px;top:132px;width:42px;height:16px;border-right:1px solid #2c2c2c;box-shadow:inset 0 1px 0 #4a4a4a"></div><span class="t b" style="left:123px;top:136px;font-size:10.4px;line-height:12px;transform:scaleX(0.9);color:#a9a9a9;">Styles</span><svg style="left:247px;top:137px;" width="15" height="9" viewBox="0 0 15 9"><path d="M0 3h5l-2.5 3.5z" fill="#d6d6d6"/><path d="M6 1.5h9M6 3.5h9M6 5.5h9M6 7.5h9" stroke="#d6d6d6" stroke-width="1"/></svg>
<span class="t b" style="left:52.2px;top:156px;font-size:10.4px;line-height:12px;color:#fff;">Add an adjustment</span>
<svg width="0" height="0" style="left:0;top:0"><defs><linearGradient id="gA" x1="0" y1="0" x2="0" y2="1"><stop offset="0" stop-color="#8c8c8c"/><stop offset="1" stop-color="#bdbdbd"/></linearGradient><linearGradient id="gB" x1="0" y1="0" x2="1" y2="0"><stop offset="0" stop-color="#3c3c3c"/><stop offset="1" stop-color="#b4b4b4"/></linearGradient><radialGradient id="gV" cx=".5" cy=".3" r=".6"><stop offset="0" stop-color="#6a6a6a"/><stop offset="1" stop-color="#c4c4c4"/></radialGradient></defs></svg>
<svg style="left:89px;top:173px;" width="17" height="17" viewBox="0 0 17 17"><g stroke="#c9c9c9" stroke-width="1.6"><path d="M8.5 0v2.5M8.5 14.5v2.5M0 8.5h2.5M14.5 8.5h2.5M2.5 2.5l1.8 1.8M12.7 12.7l1.8 1.8M14.5 2.5l-1.8 1.8M4.3 12.7l-1.8 1.8"/></g><circle cx="8.5" cy="8.5" r="4" fill="#6e6e6e" stroke="#c9c9c9" stroke-width="1.2"/><path d="M8.5 4.5a4 4 0 0 1 0 8z" fill="#c9c9c9"/></svg>
<svg style="left:113px;top:174px;" width="18" height="13" viewBox="0 0 18 13"><path d="M0 12.5v-6l1 -3 1.5 4 1.5-5 1.5 4 1.5-6 1.5 5.5 1.5-6 1.5 6 1.5-5 1.5 5 1.5-4 1 3v7z" fill="#c9c9c9"/><rect y="10" width="18" height="2.5" fill="#c0c0c0"/></svg>
<svg style="left:138px;top:174px;" width="16" height="14" viewBox="0 0 16 14"><rect x=".6" y=".6" width="14.8" height="12.8" fill="url(#gA)" stroke="#c9c9c9" stroke-width="1.2"/><path d="M1 5h14M1 9h14M5.5 1v12M10.5 1v12" stroke="#7a7a7a" stroke-width=".8"/><path d="M1.5 12.5c5 0 6-2 7-5.5s2-5.5 6.5-5.5" fill="none" stroke="#e6e6e6" stroke-width="1.2"/></svg>
<svg style="left:162px;top:174px;" width="16" height="14" viewBox="0 0 16 14"><rect x=".6" y=".6" width="14.8" height="12.8" fill="url(#gA)" stroke="#c9c9c9" stroke-width="1.2"/><path d="M1.2 12.8l13.6-11.6v11.6z" fill="#d0d0d0"/><path d="M2.5 4.5h4M4.5 2.5v4" stroke="#333" stroke-width="1"/><path d="M9.5 10h4" stroke="#333" stroke-width="1"/></svg>
<svg style="left:186px;top:173px;" width="17" height="17" viewBox="0 0 17 17"><path d="M.5 .8h16l-8 15.5z" fill="url(#gV)" stroke="#c9c9c9" stroke-width=".8"/></svg>
<svg style="left:78px;top:201px;" width="16" height="14" viewBox="0 0 16 14"><rect x=".6" y=".6" width="14.8" height="12.8" fill="url(#gA)" stroke="#c9c9c9" stroke-width="1.2"/><rect x="1.2" y="1.2" width="13.6" height="4.5" fill="#9a9a9a"/><path d="M3 1.2v4.5M6 1.2v4.5M9 1.2v4.5M12 1.2v4.5" stroke="#c9c9c9" stroke-width="1.2" opacity=".6"/><rect x="1.2" y="6.5" width="13.6" height="6.3" fill="url(#gB)"/></svg>
<svg style="left:101px;top:200px;" width="18" height="16" viewBox="0 0 18 16"><path d="M9 0v4M2 4.5h14" stroke="#c9c9c9" stroke-width="1.8"/><path d="M3.8 5l-3 6.5h6zM14.2 5l-3 6.5h6z" fill="none" stroke="#c9c9c9" stroke-width="1"/><path d="M.3 11.5h7a3.5 3 0 0 1-7 0zM10.7 11.5h7a3.5 3 0 0 1-7 0z" fill="#c9c9c9"/><path d="M7 2l2-2 2 2z" fill="#c9c9c9"/></svg>
<svg style="left:126px;top:201px;" width="16" height="14" viewBox="0 0 16 14"><rect x=".6" y=".6" width="14.8" height="12.8" fill="url(#gA)" stroke="#c9c9c9" stroke-width="1.2"/><rect x="1.5" y="1.5" width="6.5" height="11" fill="#4a4a4a"/></svg>
<svg style="left:149px;top:200px;" width="18" height="17" viewBox="0 0 18 17"><path d="M.5 3h3l1-2h5l1 2h4v8.5h-14z" fill="url(#gA)" stroke="#c9c9c9" stroke-width=".8"/><circle cx="8" cy="7" r="2.3" fill="none" stroke="#444" stroke-width="1.2"/><circle cx="12" cy="11" r="4.8" fill="#9c9c9c" fill-opacity=".85" stroke="#c9c9c9" stroke-width="1"/></svg>
<svg style="left:173px;top:200px;" width="18" height="17" viewBox="0 0 18 17"><circle cx="9" cy="5.5" r="4.8" fill="#c4c4c4"/><circle cx="5.3" cy="11" r="4.8" fill="#bdbdbd"/><circle cx="12.7" cy="11" r="4.8" fill="#b4b4b4"/><path d="M5.5 6.5h7l-2.5 3.5v3l-1 1.5-1-1.5v-3z" fill="#555"/></svg>
<svg style="left:198px;top:201px;" width="16" height="14" viewBox="0 0 16 14"><rect x=".6" y=".6" width="14.8" height="12.8" fill="url(#gA)" stroke="#c9c9c9" stroke-width="1.2"/><g fill="#5a5a5a"><rect x="6" y="2" width="3.5" height="2.8" fill="#777"/><rect x="10.5" y="2" width="3.5" height="2.8"/><rect x="2" y="5.7" width="3.2" height="2.8" fill="#888"/><rect x="6" y="5.7" width="3.5" height="2.8"/><rect x="10.5" y="5.7" width="3.5" height="2.8" fill="#444"/><rect x="2" y="9.4" width="3.2" height="2.8"/><rect x="6" y="9.4" width="3.5" height="2.8" fill="#444"/><rect x="10.5" y="9.4" width="3.5" height="2.8" fill="#333"/></g></svg>
<svg style="left:90px;top:228px;" width="16" height="14" viewBox="0 0 16 14"><rect x=".6" y=".6" width="14.8" height="12.8" fill="url(#gA)" stroke="#c9c9c9" stroke-width="1.2"/><path d="M1.2 12.8l13.6-11.6v11.6z" fill="#c4c4c4"/><ellipse cx="8" cy="7" rx="4.2" ry="3.2" fill="#6a6a6a" transform="rotate(-35 8 7)"/></svg>
<svg style="left:114px;top:228px;" width="16" height="14" viewBox="0 0 16 14"><rect x=".6" y=".6" width="14.8" height="12.8" fill="url(#gA)" stroke="#c9c9c9" stroke-width="1.2"/><path d="M1.2 8l8-6.8h5.6l-13.6 11.6z" fill="#7a7a7a"/><path d="M5 12.8l9.8-8.3v4.5l-4.5 3.8z" fill="#888"/></svg>
<svg style="left:138px;top:228px;" width="16" height="14" viewBox="0 0 16 14"><rect x=".6" y=".6" width="14.8" height="12.8" fill="url(#gA)" stroke="#c9c9c9" stroke-width="1.2"/><path d="M2 9.5v-2h2v-1.5h3v-1.5h3v-1.5h4.5v2h-2.5v1.5h-3v1.5h-3v1.5zM6.5 12v-1.5h7.5v-1.5h.8v3z" fill="#444"/></svg>
<svg style="left:162px;top:228px;" width="16" height="14" viewBox="0 0 16 14"><rect x=".6" y=".6" width="14.8" height="12.8" fill="url(#gA)" stroke="#c9c9c9" stroke-width="1.2"/><path d="M1.2 1.2l6.8 5.8-6.8 5.8zM14.8 1.2l-6.8 5.8 6.8 5.8z" fill="#7c7c7c"/><path d="M1.2 1.2h13.6l-6.8 5.8z" fill="#bcbcbc"/></svg>
<svg style="left:186px;top:228px;" width="16" height="14" viewBox="0 0 16 14"><rect x=".6" y=".6" width="14.8" height="12.8" fill="url(#gB)" stroke="#c9c9c9" stroke-width="1.2"/></svg>
<div class="panel" style="left:43px;top:255px;width:222px;height:408px;"></div>
<div class="tabbar" style="left:43px;top:255px;width:222px;height:17px;border-bottom:1px solid #2c2c2c"></div><div style="left:43px;top:255px;width:44px;height:17px;background:#535353;border-right:1px solid #2c2c2c;box-shadow:inset 0 1px 0 #626262"></div><span class="t b" style="left:50px;top:259px;font-size:10.4px;line-height:12px;transform:scaleX(0.837);color:#f0f0f0;">Layers</span><div style="left:87px;top:255px;width:56px;height:16px;border-right:1px solid #2c2c2c;box-shadow:inset 0 1px 0 #4a4a4a"></div><span class="t b" style="left:93px;top:259px;font-size:10.4px;line-height:12px;transform:scaleX(0.889);color:#a9a9a9;">Channels</span><div style="left:143px;top:255px;width:41px;height:16px;border-right:1px solid #2c2c2c;box-shadow:inset 0 1px 0 #4a4a4a"></div><span class="t b" style="left:150.3px;top:259px;font-size:10.4px;line-height:12px;transform:scaleX(0.885);color:#a9a9a9;">Paths</span><svg style="left:247px;top:260px;" width="15" height="9" viewBox="0 0 15 9"><path d="M0 3h5l-2.5 3.5z" fill="#d6d6d6"/><path d="M6 1.5h9M6 3.5h9M6 5.5h9M6 7.5h9" stroke="#d6d6d6" stroke-width="1"/></svg>
<div class="dd" style="left:48px;top:277px;width:69px;height:19px"></div>
<svg style="left:53px;top:280px;" width="12" height="12" viewBox="0 0 12 12"><circle cx="7" cy="4.5" r="3.2" fill="none" stroke="#d8d8d8" stroke-width="1.4"/><path d="M4.8 7l-3.5 3.8" stroke="#d8d8d8" stroke-width="1.8"/></svg>
<span class="t" style="left:69.1px;top:281px;font-size:10.4px;line-height:12px;transform:scaleX(0.93);color:#f0f0f0;">Kind</span>
<svg style="left:106.5px;top:281.5px;" width="7" height="10" viewBox="0 0 7 10"><path d="M.5 3.5h6l-3-3.5zM.5 6h6l-3 3.5z" fill="#f0f0f0"/></svg>
<svg style="left:128.5px;top:279.5px;" width="14" height="12" viewBox="0 0 14 12"><rect x=".6" y=".6" width="12.8" height="10.8" fill="#4c4c4c" stroke="#d2d2d2" stroke-width="1.2"/><path d="M2 9.5l3-4 2.2 2.5 1.5-1.5 3.3 3z" fill="#d2d2d2"/><circle cx="10" cy="3.8" r="1.3" fill="#d2d2d2"/></svg>
<svg style="left:153px;top:279.5px;" width="12" height="12" viewBox="0 0 12 12"><circle cx="6" cy="6" r="5.2" fill="#555" stroke="#d2d2d2" stroke-width="1.2"/><path d="M2.4 9.7a5.2 5.2 0 0 1 7.3-7.3z" fill="#d2d2d2"/></svg>
<span class="t b" style="left:177.8px;top:278px;font-size:15.5px;line-height:18px;font-family:'Liberation Serif',serif;color:#d2d2d2;transform:scaleX(.95);">T</span>
<svg style="left:201.5px;top:279.5px;" width="12" height="12" viewBox="0 0 12 12"><rect x="1.8" y="1.8" width="8.4" height="8.4" fill="none" stroke="#d2d2d2" stroke-width="1.3"/><g fill="#4a4a4a" stroke="#d2d2d2" stroke-width="1"><rect x=".5" y=".5" width="2.6" height="2.6"/><rect x="8.9" y=".5" width="2.6" height="2.6"/><rect x=".5" y="8.9" width="2.6" height="2.6"/><rect x="8.9" y="8.9" width="2.6" height="2.6"/></g></svg>
<svg style="left:225.5px;top:279.5px;" width="13" height="13" viewBox="0 0 13 13"><path d="M4 .6h5.5l2.8 2.8v8h-8.3z" fill="#4a4a4a" stroke="#d2d2d2" stroke-width="1.1"/><path d="M9.5 .6v2.8h2.8" fill="none" stroke="#d2d2d2" stroke-width="1"/><rect x="0" y="6" width="6.5" height="6.5" fill="#bdbdbd"/></svg>
<div style="left:251px;top:277px;width:10px;height:18px;border:1px solid #2d2d2d;border-radius:2px;background:linear-gradient(#b0b0b0 0%,#7e7e7e 47%,#3a3a3a 50%,#3a3a3a 100%);box-shadow:0 1px 0 #5e5e5e"></div>
<div style="left:43px;top:299px;width:222px;height:1px;background:#3b3b3b;box-shadow:0 1px 0 #5f5f5f"></div>
<div class="dd" style="left:48px;top:305px;width:110px;height:19px;background:linear-gradient(#626262,#535353);box-shadow:inset 0 1px 0 #6d6d6d,0 1px 0 #5e5e5e"></div>
<span class="t" style="left:55.1px;top:309px;font-size:10.4px;line-height:12px;transform:scaleX(0.93);color:#b4b4b4;">Normal</span>
<svg style="left:147px;top:309.5px;" width="7" height="10" viewBox="0 0 7 10"><path d="M.5 3.5h6l-3-3.5zM.5 6h6l-3 3.5z" fill="#b4b4b4"/></svg>
<span class="t" style="left:165.2px;top:309px;font-size:10.4px;line-height:12px;transform:scaleX(0.941);color:#c4c4c4;">Opacity:</span>
<div style="left:207px;top:305px;width:54px;height:18px;border:1px solid #3a3a3a;border-radius:2px;background:#4a4a4a;box-shadow:0 1px 0 #5e5e5e;overflow:hidden"><div style="left:34px;top:0;width:19px;height:16px;background:linear-gradient(#5f5f5f,#545454);border-left:1px solid #3f3f3f"></div></div><span class="t" style="left:212.6px;top:309px;font-size:10.4px;line-height:12px;transform:scaleX(0.92);color:#858585;">100%</span><svg style="left:248.5px;top:313px;" width="6" height="4" viewBox="0 0 6 4"><path d="M0 0h6l-3 3.5z" fill="#b0b0b0"/></svg>
<div style="left:43px;top:328px;width:222px;height:1px;background:#3b3b3b;box-shadow:0 1px 0 #5f5f5f"></div>
<span class="t" style="left:49px;top:338px;font-size:10.4px;line-height:12px;transform:scaleX(0.936);color:#c4c4c4;">Lock:</span>
<svg style="left:82px;top:337px;" width="12" height="12" viewBox="0 0 12 12"><rect width="12" height="12" fill="#7a7a7a"/><path d="M0 0h4v4h-4zM8 0h4v4h-4zM4 4h4v4h-4zM0 8h4v4h-4zM8 8h4v4h-4z" fill="#a6a6a6"/><rect x=".5" y=".5" width="11" height="11" fill="none" stroke="#8e8e8e" stroke-width="1"/></svg>
<svg style="left:102px;top:334px;" width="17" height="15" viewBox="0 0 17 15"><path d="M15.5 .5l1 1-7 9-1.8-1.5z" fill="#9a9a9a"/><path d="M.5 13.5c2.5-.4 4.5-2 6-4.5l2.8 2.2c-1.8 2.8-5 4-8.8 2.3z" fill="#9a9a9a"/></svg>
<svg style="left:125px;top:334.5px;" width="14" height="14" viewBox="0 0 14 14"><path d="M7 1v12M1 7h12" stroke="#9a9a9a" stroke-width="1.3"/><path d="M7 0l-2.3 2.8h4.6zM7 14l-2.3-2.8h4.6zM0 7l2.8-2.3v4.6zM14 7l-2.8-2.3v4.6z" fill="#9a9a9a"/></svg>
<svg style="left:149px;top:335px;" width="11" height="14" viewBox="0 0 11 14"><path d="M2.5 6v-2.2a3 3 0 0 1 6 0v2.2" fill="none" stroke="#9a9a9a" stroke-width="1.5"/><rect x=".5" y="6" width="10" height="7.5" rx="1" fill="#9a9a9a"/><rect x="4.7" y="8.3" width="1.6" height="3" fill="#535353"/></svg>
<span class="t" style="left:187px;top:336px;font-size:10.4px;line-height:12px;transform:scaleX(0.868);color:#c4c4c4;">Fill:</span>
<div style="left:207px;top:333px;width:54px;height:18px;border:1px solid #3a3a3a;border-radius:2px;background:#4a4a4a;box-shadow:0 1px 0 #5e5e5e;overflow:hidden"><div style="left:34px;top:0;width:19px;height:16px;background:linear-gradient(#5f5f5f,#545454);border-left:1px solid #3f3f3f"></div></div><span class="t" style="left:212.6px;top:337px;font-size:10.4px;line-height:12px;transform:scaleX(0.92);color:#858585;">100%</span><svg style="left:248.5px;top:341px;" width="6" height="4" viewBox="0 0 6 4"><path d="M0 0h6l-3 3.5z" fill="#b0b0b0"/></svg>
<div style="left:43px;top:357px;width:222px;height:1px;background:#333"></div>
<div style="left:43px;top:358px;width:207px;height:287px;overflow:hidden">
<div style="left:0px;top:0px;width:30px;height:26px;background:#535353"></div>
<div style="left:31px;top:0px;width:176px;height:26px;background:#5a6678"></div>
<div style="left:30px;top:0px;width:1px;height:27px;background:#3b3b3b"></div>
<div style="left:0px;top:26px;width:207px;height:1px;background:#3b3b3b"></div>
<svg style="left:9px;top:8px;" width="13" height="10" viewBox="0 0 13 10"><path d="M.3 5.2c2.8-6.2 9.6-6.2 12.4 0-2.8 5.6-9.6 5.6-12.4 0z" fill="#a9a9a9"/><path d="M.3 5.2c2.8-6.2 9.6-6.2 12.4 0" fill="none" stroke="#3e3e3e" stroke-width=".7" opacity=".6" transform="translate(0 -.7)"/><circle cx="6.5" cy="4.8" r="3" fill="#3a3a3a"/><circle cx="7.6" cy="3.8" r="1" fill="#d4d4d4"/></svg>
<div style="left:34px;top:3px;width:32px;height:20px;border:1px solid #000;background-color:#fff;background-image:linear-gradient(45deg,#ccc 25%,transparent 25%,transparent 75%,#ccc 75%),linear-gradient(45deg,#ccc 25%,transparent 25%,transparent 75%,#ccc 75%);background-size:8px 8px;background-position:0 0,4px 4px;"></div>
<svg style="left:42px;top:5px;filter:none;" width="18" height="16" viewBox="0 0 18 16"><path d="M4 0l3 3-1 1-3-3zM8 3l2 4-1.5.5-2-4zM6 7l5 3-1 1.5-5-3zM10 9l3 4-1.5 1-3-4zM12 13l3 2-1 1-3-2z" fill="#fff" opacity=".85"/></svg>
<svg style="left:32px;top:1px;" width="36" height="24" viewBox="0 0 36 24"><path d="M.5 8v-7.5h11.5M24 .5h11.5v7.5M35.5 16v7.5h-11.5M12 23.5h-11.5v-7.5" fill="none" stroke="#fff" stroke-width="1"/></svg>
<span class="t" style="left:76px;top:10px;font-size:10.4px;line-height:12px;transform:scaleX(0.93);color:#fff;">Layer 2 copy 102</span>
<div style="left:0px;top:27px;width:30px;height:26px;background:#535353"></div>
<div style="left:31px;top:27px;width:176px;height:26px;background:#535353"></div>
<div style="left:30px;top:27px;width:1px;height:27px;background:#3b3b3b"></div>
<div style="left:0px;top:53px;width:207px;height:1px;background:#3b3b3b"></div>
<svg style="left:9px;top:35px;" width="13" height="10" viewBox="0 0 13 10"><path d="M.3 5.2c2.8-6.2 9.6-6.2 12.4 0-2.8 5.6-9.6 5.6-12.4 0z" fill="#a9a9a9"/><path d="M.3 5.2c2.8-6.2 9.6-6.2 12.4 0" fill="none" stroke="#3e3e3e" stroke-width=".7" opacity=".6" transform="translate(0 -.7)"/><circle cx="6.5" cy="4.8" r="3" fill="#3a3a3a"/><circle cx="7.6" cy="3.8" r="1" fill="#d4d4d4"/></svg>
<div style="left:34px;top:30px;width:32px;height:20px;border:1px solid #000;background-color:#fff;background-image:linear-gradient(45deg,#ccc 25%,transparent 25%,transparent 75%,#ccc 75%),linear-gradient(45deg,#ccc 25%,transparent 25%,transparent 75%,#ccc 75%);background-size:8px 8px;background-position:0 0,4px 4px;"></div>
<svg style="left:42px;top:32px;filter:none;" width="18" height="16" viewBox="0 0 18 16"><path d="M4 0l3 3-1 1-3-3zM8 3l2 4-1.5.5-2-4zM6 7l5 3-1 1.5-5-3zM10 9l3 4-1.5 1-3-4zM12 13l3 2-1 1-3-2z" fill="#fff" opacity=".85"/></svg>
<span class="t" style="left:76px;top:37px;font-size:10.4px;line-height:12px;transform:scaleX(0.93);color:#f0f0f0;">Layer 2 copy 101</span>
<div style="left:0px;top:54px;width:30px;height:26px;background:#535353"></div>
<div style="left:31px;top:54px;width:176px;height:26px;background:#535353"></div>
<div style="left:30px;top:54px;width:1px;height:27px;background:#3b3b3b"></div>
<div style="left:0px;top:80px;width:207px;height:1px;background:#3b3b3b"></div>
<svg style="left:9px;top:62px;" width="13" height="10" viewBox="0 0 13 10"><path d="M.3 5.2c2.8-6.2 9.6-6.2 12.4 0-2.8 5.6-9.6 5.6-12.4 0z" fill="#a9a9a9"/><path d="M.3 5.2c2.8-6.2 9.6-6.2 12.4 0" fill="none" stroke="#3e3e3e" stroke-width=".7" opacity=".6" transform="translate(0 -.7)"/><circle cx="6.5" cy="4.8" r="3" fill="#3a3a3a"/><circle cx="7.6" cy="3.8" r="1" fill="#d4d4d4"/></svg>
<div style="left:34px;top:57px;width:32px;height:20px;border:1px solid #000;background-color:#fff;background-image:linear-gradient(45deg,#ccc 25%,transparent 25%,transparent 75%,#ccc 75%),linear-gradient(45deg,#ccc 25%,transparent 25%,transparent 75%,#ccc 75%);background-size:8px 8px;background-position:0 0,4px 4px;"></div>
<svg style="left:42px;top:59px;filter:none;" width="18" height="16" viewBox="0 0 18 16"><path d="M4 0l3 3-1 1-3-3zM8 3l2 4-1.5.5-2-4zM6 7l5 3-1 1.5-5-3zM10 9l3 4-1.5 1-3-4zM12 13l3 2-1 1-3-2z" fill="#fff" opacity=".85"/></svg>
<span class="t" style="left:76px;top:64px;font-size:10.4px;line-height:12px;transform:scaleX(0.93);color:#f0f0f0;">Layer 2 copy 100</span>
<div style="left:0px;top:81px;width:30px;height:26px;background:#535353"></div>
<div style="left:31px;top:81px;width:176px;height:26px;background:#535353"></div>
<div style="left:30px;top:81px;width:1px;height:27px;background:#3b3b3b"></div>
<div style="left:0px;top:107px;width:207px;height:1px;background:#3b3b3b"></div>
<svg style="left:9px;top:89px;" width="13" height="10" viewBox="0 0 13 10"><path d="M.3 5.2c2.8-6.2 9.6-6.2 12.4 0-2.8 5.6-9.6 5.6-12.4 0z" fill="#a9a9a9"/><path d="M.3 5.2c2.8-6.2 9.6-6.2 12.4 0" fill="none" stroke="#3e3e3e" stroke-width=".7" opacity=".6" transform="translate(0 -.7)"/><circle cx="6.5" cy="4.8" r="3" fill="#3a3a3a"/><circle cx="7.6" cy="3.8" r="1" fill="#d4d4d4"/></svg>
<div style="left:34px;top:84px;width:32px;height:20px;border:1px solid #000;background-color:#fff;background-image:linear-gradient(45deg,#ccc 25%,transparent 25%,transparent 75%,#ccc 75%),linear-gradient(45deg,#ccc 25%,transparent 25%,transparent 75%,#ccc 75%);background-size:8px 8px;background-position:0 0,4px 4px;"></div>
<svg style="left:42px;top:86px;filter:none;" width="18" height="16" viewBox="0 0 18 16"><path d="M4 0l3 3-1 1-3-3zM8 3l2 4-1.5.5-2-4zM6 7l5 3-1 1.5-5-3zM10 9l3 4-1.5 1-3-4zM12 13l3 2-1 1-3-2z" fill="#fff" opacity=".85"/></svg>
<span class="t" style="left:76px;top:91px;font-size:10.4px;line-height:12px;transform:scaleX(0.93);color:#f0f0f0;">Layer 2 copy 99</span>
<div style="left:0px;top:108px;width:30px;height:26px;background:#535353"></div>
<div style="left:31px;top:108px;width:176px;height:26px;background:#535353"></div>
<div style="left:30px;top:108px;width:1px;height:27px;background:#3b3b3b"></div>
<div style="left:0px;top:134px;width:207px;height:1px;background:#3b3b3b"></div>
<svg style="left:9px;top:116px;" width="13" height="10" viewBox="0 0 13 10"><path d="M.3 5.2c2.8-6.2 9.6-6.2 12.4 0-2.8 5.6-9.6 5.6-12.4 0z" fill="#a9a9a9"/><path d="M.3 5.2c2.8-6.2 9.6-6.2 12.4 0" fill="none" stroke="#3e3e3e" stroke-width=".7" opacity=".6" transform="translate(0 -.7)"/><circle cx="6.5" cy="4.8" r="3" fill="#3a3a3a"/><circle cx="7.6" cy="3.8" r="1" fill="#d4d4d4"/></svg>
<div style="left:34px;top:111px;width:32px;height:20px;border:1px solid #000;background-color:#fff;background-image:linear-gradient(45deg,#ccc 25%,transparent 25%,transparent 75%,#ccc 75%),linear-gradient(45deg,#ccc 25%,transparent 25%,transparent 75%,#ccc 75%);background-size:8px 8px;background-position:0 0,4px 4px;"></div>
<svg style="left:42px;top:113px;filter:none;" width="18" height="16" viewBox="0 0 18 16"><path d="M4 0l3 3-1 1-3-3zM8 3l2 4-1.5.5-2-4zM6 7l5 3-1 1.5-5-3zM10 9l3 4-1.5 1-3-4zM12 13l3 2-1 1-3-2z" fill="#fff" opacity=".85"/></svg>
<span class="t" style="left:76px;top:118px;font-size:10.4px;line-height:12px;transform:scaleX(0.93);color:#f0f0f0;">Layer 2 copy 98</span>
<div style="left:0px;top:135px;width:30px;height:26px;background:#535353"></div>
<div style="left:31px;top:135px;width:176px;height:26px;background:#535353"></div>
<div style="left:30px;top:135px;width:1px;height:27px;background:#3b3b3b"></div>
<div style="left:0px;top:161px;width:207px;height:1px;background:#3b3b3b"></div>
<svg style="left:9px;top:143px;" width="13" height="10" viewBox="0 0 13 10"><path d="M.3 5.2c2.8-6.2 9.6-6.2 12.4 0-2.8 5.6-9.6 5.6-12.4 0z" fill="#a9a9a9"/><path d="M.3 5.2c2.8-6.2 9.6-6.2 12.4 0" fill="none" stroke="#3e3e3e" stroke-width=".7" opacity=".6" transform="translate(0 -.7)"/><circle cx="6.5" cy="4.8" r="3" fill="#3a3a3a"/><circle cx="7.6" cy="3.8" r="1" fill="#d4d4d4"/></svg>
<div style="left:34px;top:138px;width:32px;height:20px;border:1px solid #000;background-color:#fff;background-image:linear-gradient(45deg,#ccc 25%,transparent 25%,transparent 75%,#ccc 75%),linear-gradient(45deg,#ccc 25%,transparent 25%,transparent 75%,#ccc 75%);background-size:8px 8px;background-position:0 0,4px 4px;"></div>
<svg style="left:42px;top:140px;filter:none;" width="18" height="16" viewBox="0 0 18 16"><path d="M4 0l3 3-1 1-3-3zM8 3l2 4-1.5.5-2-4zM6 7l5 3-1 1.5-5-3zM10 9l3 4-1.5 1-3-4zM12 13l3 2-1 1-3-2z" fill="#fff" opacity=".85"/></svg>
<span class="t" style="left:76px;top:145px;font-size:10.4px;line-height:12px;transform:scaleX(0.93);color:#f0f0f0;">Layer 2 copy 97</span>
<div style="left:0px;top:162px;width:30px;height:26px;background:#535353"></div>
<div style="left:31px;top:162px;width:176px;height:26px;background:#535353"></div>
<div style="left:30px;top:162px;width:1px;height:27px;background:#3b3b3b"></div>
<div style="left:0px;top:188px;width:207px;height:1px;background:#3b3b3b"></div>
<svg style="left:9px;top:170px;" width="13" height="10" viewBox="0 0 13 10"><path d="M.3 5.2c2.8-6.2 9.6-6.2 12.4 0-2.8 5.6-9.6 5.6-12.4 0z" fill="#a9a9a9"/><path d="M.3 5.2c2.8-6.2 9.6-6.2 12.4 0" fill="none" stroke="#3e3e3e" stroke-width=".7" opacity=".6" transform="translate(0 -.7)"/><circle cx="6.5" cy="4.8" r="3" fill="#3a3a3a"/><circle cx="7.6" cy="3.8" r="1" fill="#d4d4d4"/></svg>
<div style="left:34px;top:165px;width:32px;height:20px;border:1px solid #000;background-color:#fff;background-image:linear-gradient(45deg,#ccc 25%,transparent 25%,transparent 75%,#ccc 75%),linear-gradient(45deg,#ccc 25%,transparent 25%,transparent 75%,#ccc 75%);background-size:8px 8px;background-position:0 0,4px 4px;"></div>
<svg style="left:42px;top:167px;filter:none;" width="18" height="16" viewBox="0 0 18 16"><path d="M4 0l3 3-1 1-3-3zM8 3l2 4-1.5.5-2-4zM6 7l5 3-1 1.5-5-3zM10 9l3 4-1.5 1-3-4zM12 13l3 2-1 1-3-2z" fill="#fff" opacity=".85"/></svg>
<span class="t" style="left:76px;top:172px;font-size:10.4px;line-height:12px;transform:scaleX(0.93);color:#f0f0f0;">Layer 2 copy 96</span>
<div style="left:0px;top:189px;width:30px;height:26px;background:#535353"></div>
<div style="left:31px;top:189px;width:176px;height:26px;background:#535353"></div>
<div style="left:30px;top:189px;width:1px;height:27px;background:#3b3b3b"></div>
<div style="left:0px;top:215px;width:207px;height:1px;background:#3b3b3b"></div>
<svg style="left:9px;top:197px;" width="13" height="10" viewBox="0 0 13 10"><path d="M.3 5.2c2.8-6.2 9.6-6.2 12.4 0-2.8 5.6-9.6 5.6-12.4 0z" fill="#a9a9a9"/><path d="M.3 5.2c2.8-6.2 9.6-6.2 12.4 0" fill="none" stroke="#3e3e3e" stroke-width=".7" opacity=".6" transform="translate(0 -.7)"/><circle cx="6.5" cy="4.8" r="3" fill="#3a3a3a"/><circle cx="7.6" cy="3.8" r="1" fill="#d4d4d4"/></svg>
<div style="left:34px;top:192px;width:32px;height:20px;border:1px solid #000;background-color:#fff;background-image:linear-gradient(45deg,#ccc 25%,transparent 25%,transparent 75%,#ccc 75%),linear-gradient(45deg,#ccc 25%,transparent 25%,transparent 75%,#ccc 75%);background-size:8px 8px;background-position:0 0,4px 4px;"></div>
<svg style="left:42px;top:194px;filter:none;" width="18" height="16" viewBox="0 0 18 16"><path d="M4 0l3 3-1 1-3-3zM8 3l2 4-1.5.5-2-4zM6 7l5 3-1 1.5-5-3zM10 9l3 4-1.5 1-3-4zM12 13l3 2-1 1-3-2z" fill="#fff" opacity=".85"/></svg>
<span class="t" style="left:76px;top:199px;font-size:10.4px;line-height:12px;transform:scaleX(0.93);color:#f0f0f0;">Layer 2 copy 95</span>
<div style="left:0px;top:216px;width:30px;height:26px;background:#535353"></div>
<div style="left:31px;top:216px;width:176px;height:26px;background:#535353"></div>
<div style="left:30px;top:216px;width:1px;height:27px;background:#3b3b3b"></div>
<div style="left:0px;top:242px;width:207px;height:1px;background:#3b3b3b"></div>
<svg style="left:9px;top:224px;" width="13" height="10" viewBox="0 0 13 10"><path d="M.3 5.2c2.8-6.2 9.6-6.2 12.4 0-2.8 5.6-9.6 5.6-12.4 0z" fill="#a9a9a9"/><path d="M.3 5.2c2.8-6.2 9.6-6.2 12.4 0" fill="none" stroke="#3e3e3e" stroke-width=".7" opacity=".6" transform="translate(0 -.7)"/><circle cx="6.5" cy="4.8" r="3" fill="#3a3a3a"/><circle cx="7.6" cy="3.8" r="1" fill="#d4d4d4"/></svg>
<div style="left:34px;top:219px;width:32px;height:20px;border:1px solid #000;background-color:#fff;background-image:linear-gradient(45deg,#ccc 25%,transparent 25%,transparent 75%,#ccc 75%),linear-gradient(45deg,#ccc 25%,transparent 25%,transparent 75%,#ccc 75%);background-size:8px 8px;background-position:0 0,4px 4px;"></div>
<svg style="left:42px;top:221px;filter:none;" width="18" height="16" viewBox="0 0 18 16"><path d="M4 0l3 3-1 1-3-3zM8 3l2 4-1.5.5-2-4zM6 7l5 3-1 1.5-5-3zM10 9l3 4-1.5 1-3-4zM12 13l3 2-1 1-3-2z" fill="#fff" opacity=".85"/></svg>
<span class="t" style="left:76px;top:226px;font-size:10.4px;line-height:12px;transform:scaleX(0.93);color:#f0f0f0;">Layer 2 copy 94</span>
<div style="left:0px;top:243px;width:30px;height:26px;background:#535353"></div>
<div style="left:31px;top:243px;width:176px;height:26px;background:#535353"></div>
<div style="left:30px;top:243px;width:1px;height:27px;background:#3b3b3b"></div>
<div style="left:0px;top:269px;width:207px;height:1px;background:#3b3b3b"></div>
<svg style="left:9px;top:251px;" width="13" height="10" viewBox="0 0 13 10"><path d="M.3 5.2c2.8-6.2 9.6-6.2 12.4 0-2.8 5.6-9.6 5.6-12.4 0z" fill="#a9a9a9"/><path d="M.3 5.2c2.8-6.2 9.6-6.2 12.4 0" fill="none" stroke="#3e3e3e" stroke-width=".7" opacity=".6" transform="translate(0 -.7)"/><circle cx="6.5" cy="4.8" r="3" fill="#3a3a3a"/><circle cx="7.6" cy="3.8" r="1" fill="#d4d4d4"/></svg>
<div style="left:34px;top:246px;width:32px;height:20px;border:1px solid #000;background-color:#fff;background-image:linear-gradient(45deg,#ccc 25%,transparent 25%,transparent 75%,#ccc 75%),linear-gradient(45deg,#ccc 25%,transparent 25%,transparent 75%,#ccc 75%);background-size:8px 8px;background-position:0 0,4px 4px;"></div>
<svg style="left:42px;top:248px;filter:none;" width="18" height="16" viewBox="0 0 18 16"><path d="M4 0l3 3-1 1-3-3zM8 3l2 4-1.5.5-2-4zM6 7l5 3-1 1.5-5-3zM10 9l3 4-1.5 1-3-4zM12 13l3 2-1 1-3-2z" fill="#fff" opacity=".85"/></svg>
<span class="t" style="left:76px;top:253px;font-size:10.4px;line-height:12px;transform:scaleX(0.93);color:#f0f0f0;">Layer 2 copy 93</span>
<div style="left:0px;top:270px;width:30px;height:26px;background:#535353"></div>
<div style="left:31px;top:270px;width:176px;height:26px;background:#535353"></div>
<div style="left:30px;top:270px;width:1px;height:27px;background:#3b3b3b"></div>
<div style="left:0px;top:296px;width:207px;height:1px;background:#3b3b3b"></div>
<svg style="left:9px;top:278px;" width="13" height="10" viewBox="0 0 13 10"><path d="M.3 5.2c2.8-6.2 9.6-6.2 12.4 0-2.8 5.6-9.6 5.6-12.4 0z" fill="#a9a9a9"/><path d="M.3 5.2c2.8-6.2 9.6-6.2 12.4 0" fill="none" stroke="#3e3e3e" stroke-width=".7" opacity=".6" transform="translate(0 -.7)"/><circle cx="6.5" cy="4.8" r="3" fill="#3a3a3a"/><circle cx="7.6" cy="3.8" r="1" fill="#d4d4d4"/></svg>
<div style="left:34px;top:273px;width:32px;height:20px;border:1px solid #000;background-color:#fff;background-image:linear-gradient(45deg,#ccc 25%,transparent 25%,transparent 75%,#ccc 75%),linear-gradient(45deg,#ccc 25%,transparent 25%,transparent 75%,#ccc 75%);background-size:8px 8px;background-position:0 0,4px 4px;"></div>
<svg style="left:42px;top:275px;filter:none;" width="18" height="16" viewBox="0 0 18 16"><path d="M4 0l3 3-1 1-3-3zM8 3l2 4-1.5.5-2-4zM6 7l5 3-1 1.5-5-3zM10 9l3 4-1.5 1-3-4zM12 13l3 2-1 1-3-2z" fill="#fff" opacity=".85"/></svg>
<span class="t" style="left:76px;top:280px;font-size:10.4px;line-height:12px;transform:scaleX(0.93);color:#f0f0f0;">Layer 2 copy 92</span>
</div>
<div style="left:250px;top:358px;width:15px;height:287px;background:linear-gradient(90deg,#3a3a3a,#464646)"></div>
<svg style="left:255px;top:364px;" width="6" height="3" viewBox="0 0 6 3"><path d="M0 3h6l-3-3z" fill="#f4f4f4"/></svg>
<svg style="left:255px;top:636px;" width="6" height="3" viewBox="0 0 6 3"><path d="M0 0h6l-3 3z" fill="#f4f4f4"/></svg>
<div style="left:252px;top:376px;width:12px;height:21px;background:linear-gradient(90deg,#999,#6e6e6e);border-radius:3px"></div>
<div style="left:43px;top:644px;width:222px;height:2px;background:#303030"></div>
<div style="left:43px;top:646px;width:222px;height:17px;background:#535353;border-top:1px solid #646464"></div>
<svg style="left:61.5px;top:651.5px;" width="15" height="9" viewBox="0 0 15 9"><rect x=".8" y=".8" width="8" height="6.4" rx="3.2" fill="none" stroke="#a8a8a8" stroke-width="1.5"/><rect x="6.2" y=".8" width="8" height="6.4" rx="3.2" fill="none" stroke="#a8a8a8" stroke-width="1.5"/><path d="M4.5 4h6" stroke="#a8a8a8" stroke-width="1.5"/></svg>
<span class="t" style="left:90px;top:648px;font-size:14.5px;line-height:16px;font-family:'Liberation Serif',serif;font-style:italic;color:#bdbdbd;-webkit-text-stroke:.4px #bdbdbd;">fx</span>
<svg style="left:103.5px;top:658.5px;" width="4" height="3" viewBox="0 0 4 3"><path d="M0 0h4l-2 2.5z" fill="#d0d0d0"/></svg>
<svg style="left:117px;top:650px;" width="14" height="11" viewBox="0 0 14 11"><rect width="14" height="11" fill="#b4b4b4"/><circle cx="7" cy="5.5" r="2.8" fill="#4a4a4a"/></svg>
<svg style="left:144.5px;top:649.5px;" width="12" height="12" viewBox="0 0 12 12"><circle cx="6" cy="6" r="5" fill="#555" stroke="#b8b8b8" stroke-width="1.4"/><path d="M2.5 9.5a5 5 0 0 1 7-7z" fill="#b8b8b8"/></svg>
<svg style="left:157.5px;top:658.5px;" width="4" height="3" viewBox="0 0 4 3"><path d="M0 0h4l-2 2.5z" fill="#d0d0d0"/></svg>
<svg style="left:171px;top:649.5px;" width="13" height="11" viewBox="0 0 13 11"><path d="M0 0h5l1.5 1.8h6.5v9.2h-13z" fill="#b4b4b4"/></svg>
<svg style="left:199px;top:650px;" width="11" height="12" viewBox="0 0 11 12"><path d="M0 0h10.5v11.5h-5.5v-4.5h-5z" fill="#bdbdbd"/><path d="M0 7.5h4.5v4z" fill="#d8d8d8"/><path d="M0 7.5l4.5 4" stroke="#444" stroke-width=".8"/></svg>
<svg style="left:224.5px;top:648.5px;" width="12" height="13" viewBox="0 0 12 13"><path d="M4 2.5c0-2 4-2 4 0" fill="none" stroke="#c0c0c0" stroke-width="1.2"/><path d="M0 3.5h12" stroke="#c4c4c4" stroke-width="1.6"/><path d="M1.2 5h9.6l-.6 7.8h-8.4z" fill="#c0c0c0"/><path d="M3.7 6v6M6 6v6M8.3 6v6" stroke="#4a4a4a" stroke-width="1"/></svg>
</div>
<div id="toolbox">
<svg width="0" height="0" style="left:0;top:0"><defs><linearGradient id="gT" x1="0" y1="0" x2="0" y2="1"><stop offset="0" stop-color="#dedede"/><stop offset="1" stop-color="#a2a2a2"/></linearGradient><linearGradient id="gH" x1="0" y1="0" x2="1" y2="0"><stop offset="0" stop-color="#4a4a4a"/><stop offset="1" stop-color="#e0e0e0"/></linearGradient></defs></svg>
<div style="left:-1px;top:0px;width:39px;height:13px;background:linear-gradient(#3c3c3c,#343434);border:1px solid #262626;border-radius:4px 4px 0 0;box-shadow:inset 0 1px 0 #4a4a4a"></div>
<svg style="left:9px;top:3px;" width="7.5" height="6" viewBox="0 0 7.5 6"><path d="M0 0v6l3.3-3zM4.2 0v6l3.3-3z" fill="#c4c4c4"/></svg>
<svg style="left:26px;top:3.2px;" width="6.4" height="6.2" viewBox="0 0 6.4 6.2"><path d="M.6 .6l5.2 5M5.8 .6l-5.2 5" stroke="#e8e8e8" stroke-width="1.5"/></svg>
<div style="left:-1px;top:13px;width:39px;height:1px;background:#626262"></div>
<div style="left:9px;top:17px;width:20px;height:4px;background:repeating-linear-gradient(90deg,#2f2f2f 0 1px,transparent 1px 2px)"></div>
<svg style="left:10px;top:33px;" width="18" height="15" viewBox="0 0 18 15"><path d="M.5 .5v10.5l7.5-5.2z" fill="url(#gT)"/><path d="M13 5.5v8M9 9.5h8" stroke="#d0d0d0" stroke-width="1.2"/><path d="M13 4.5l-1.8 2h3.6zM13 14.5l-1.8-2h3.6zM8 9.5l2-1.8v3.6zM18 9.5l-2-1.8v3.6z" fill="#d0d0d0"/></svg>
<svg style="left:11px;top:59px;" width="15" height="15" viewBox="0 0 15 15"><path d="M.5 2v-1.5h2M5 .5h4M11.5 .5h2v1.5M13.5 4.5v4M13.5 11v2h-2M9 13h-4M2.5 13h-2v-2M.5 8.5v-4" fill="none" stroke="#d4d4d4" stroke-width="1"/></svg><svg style="left:27px;top:74px;" width="3.5" height="3.5" viewBox="0 0 3.5 3.5"><path d="M3.5 0v3.5h-3.5z" fill="#e4e4e4"/></svg>
<svg style="left:9px;top:85px;" width="19" height="16" viewBox="0 0 19 16"><ellipse cx="9.5" cy="5.8" rx="8" ry="5" fill="none" stroke="#cfcfcf" stroke-width="1.5" transform="rotate(-8 9.5 5.8)"/><circle cx="3.8" cy="10.5" r="1.6" fill="none" stroke="#cfcfcf" stroke-width="1"/><path d="M4.5 12c.8 1.3.3 2.5-.8 3.5" fill="none" stroke="#cfcfcf" stroke-width="1"/></svg><svg style="left:27px;top:100px;" width="3.5" height="3.5" viewBox="0 0 3.5 3.5"><path d="M3.5 0v3.5h-3.5z" fill="#e4e4e4"/></svg>
<svg style="left:9px;top:111px;" width="20" height="16" viewBox="0 0 20 16"><circle cx="6.5" cy="8.5" r="5.5" fill="none" stroke="#e0e0e0" stroke-width="1.2" stroke-dasharray="1.2 1.2"/><path d="M18.5 .8l1 1-6.5 7.2-1.5-1z" fill="#d8d8d8"/><path d="M4.5 12.5c3 .5 6-1 7.5-4l2 1.5c-1 3-5 5-9.5 2.5z" fill="url(#gT)"/></svg><svg style="left:27px;top:126px;" width="3.5" height="3.5" viewBox="0 0 3.5 3.5"><path d="M3.5 0v3.5h-3.5z" fill="#e4e4e4"/></svg>
<svg style="left:10px;top:136px;" width="17" height="17" viewBox="0 0 17 17"><path d="M4.5 0v12.5h12M0 4.5h12.5v12" fill="none" stroke="#d4d4d4" stroke-width="1.8"/><path d="M5.8 11.2l9.5-10" stroke="#bdbdbd" stroke-width="1"/><path d="M6 6h5v5h-5z" fill="#7a7a7a"/></svg><svg style="left:27px;top:152px;" width="3.5" height="3.5" viewBox="0 0 3.5 3.5"><path d="M3.5 0v3.5h-3.5z" fill="#e4e4e4"/></svg>
<svg style="left:10px;top:162px;" width="17" height="17" viewBox="0 0 17 17"><path d="M1 16l1-3 7.5-7.5 2 2-7.5 7.5z" fill="#5a5a5a" stroke="#d2d2d2" stroke-width="1"/><path d="M9 4.5l3.5 3.5" stroke="#e0e0e0" stroke-width="2.2"/><path d="M11 5.5l3-3.8a1.6 1.6 0 0 1 2.3 2.3l-3.8 3z" fill="#d6d6d6"/></svg><svg style="left:27px;top:178px;" width="3.5" height="3.5" viewBox="0 0 3.5 3.5"><path d="M3.5 0v3.5h-3.5z" fill="#e4e4e4"/></svg>
<div style="left:4px;top:185px;width:30px;height:1px;background:#3a3a3a;box-shadow:0 1px 0 #5e5e5e"></div>
<svg style="left:8px;top:191px;" width="20" height="18" viewBox="0 0 20 18"><ellipse cx="5" cy="7" rx="4" ry="5.5" fill="none" stroke="#e0e0e0" stroke-width="1.1" stroke-dasharray="1.1 1.3"/><rect x="1" y="5.5" width="19" height="7" rx="3.5" fill="#bdbdbd" stroke="#8a8a8a" stroke-width=".6" transform="rotate(-40 10.5 9)"/><path d="M8.5 8l1 1M10.5 6.5l1 1M10 10l1 1M12 8.5l1 1" stroke="#5a5a5a" stroke-width="1"/></svg><svg style="left:27px;top:207px;" width="3.5" height="3.5" viewBox="0 0 3.5 3.5"><path d="M3.5 0v3.5h-3.5z" fill="#e4e4e4"/></svg>
<svg style="left:9px;top:217px;" width="19" height="18" viewBox="0 0 19 18"><path d="M17.3 .5l1.2 1.2-8 10-2-1.6z" fill="#d6d6d6"/><path d="M.5 15.5c3-.5 4.5-2.5 6.5-5l3 2.5c-1.5 3-5 4.5-9.5 2.5z" fill="url(#gT)"/></svg><svg style="left:27px;top:233px;" width="3.5" height="3.5" viewBox="0 0 3.5 3.5"><path d="M3.5 0v3.5h-3.5z" fill="#e4e4e4"/></svg>
<svg style="left:10px;top:243px;" width="16" height="18" viewBox="0 0 16 18"><path d="M5.5 3a2.7 2.7 0 1 1 5 0c-.5 1.5-1 3-.5 5.5h5v4h-14.5v-4h5.5c.5-2.5 0-4-.5-5.5z" fill="url(#gT)"/><rect x=".5" y="14" width="14.5" height="1.2" fill="#d0d0d0"/><rect x=".5" y="16.3" width="14.5" height="1.2" fill="#d0d0d0"/></svg><svg style="left:27px;top:259px;" width="3.5" height="3.5" viewBox="0 0 3.5 3.5"><path d="M3.5 0v3.5h-3.5z" fill="#e4e4e4"/></svg>
<svg style="left:10px;top:270px;" width="18" height="16" viewBox="0 0 18 16"><path d="M16 .8l1.2 1-6.5 9-2-1.5z" fill="#d6d6d6"/><path d="M.8 14c2.5-.3 4.5-2 6-4.5l3 2.3c-1.8 2.8-5 4-9 2.2z" fill="url(#gT)"/><path d="M1 4.5l4-3v2h6v2h-6v2z" fill="#c8c8c8"/><path d="M14 8c1.5 2 .5 5-1.5 6.5" fill="none" stroke="#e0e0e0" stroke-width="1" stroke-dasharray="1 1.2"/></svg><svg style="left:27px;top:285px;" width="3.5" height="3.5" viewBox="0 0 3.5 3.5"><path d="M3.5 0v3.5h-3.5z" fill="#e4e4e4"/></svg>
<div style="left:3px;top:292px;width:31px;height:24px;background:#353535;border:1px solid #2b2b2b;border-radius:3px;box-shadow:0 1px 0 #626262"></div>
<svg style="left:10px;top:296px;" width="19" height="15" viewBox="0 0 19 15"><path d="M7.5 1.5h10l-5.5 7h-10z" fill="#c6c6c6"/><path d="M12 8.5l5.5-7v4.5l-5.5 7.5z" fill="#8a8a8a"/><path d="M2 8.5h10v5h-11z" fill="#a4a4a4"/></svg><svg style="left:27px;top:311px;" width="3.5" height="3.5" viewBox="0 0 3.5 3.5"><path d="M3.5 0v3.5h-3.5z" fill="#e4e4e4"/></svg>
<svg style="left:10px;top:323px;" width="17" height="14" viewBox="0 0 17 14"><rect x=".6" y=".6" width="15.3" height="12.3" fill="url(#gH)" stroke="#d6d6d6" stroke-width="1.2"/></svg><svg style="left:27px;top:337px;" width="3.5" height="3.5" viewBox="0 0 3.5 3.5"><path d="M3.5 0v3.5h-3.5z" fill="#e4e4e4"/></svg>
<svg style="left:12px;top:347px;" width="12" height="17" viewBox="0 0 12 17"><path d="M5.8 .5c1.5 3.5 5.2 6.5 5.2 10.5a5.2 5.2 0 0 1-10.4 0c0-4 3.7-7 5.2-10.5z" fill="url(#gT)"/></svg><svg style="left:27px;top:363px;" width="3.5" height="3.5" viewBox="0 0 3.5 3.5"><path d="M3.5 0v3.5h-3.5z" fill="#e4e4e4"/></svg>
<svg style="left:11px;top:374px;" width="16" height="16" viewBox="0 0 16 16"><circle cx="5.5" cy="5.5" r="5" fill="url(#gT)"/><path d="M9 9l5.5 5" stroke="#cfcfcf" stroke-width="1.8"/></svg><svg style="left:27px;top:389px;" width="3.5" height="3.5" viewBox="0 0 3.5 3.5"><path d="M3.5 0v3.5h-3.5z" fill="#e4e4e4"/></svg>
<div style="left:4px;top:396px;width:30px;height:1px;background:#3a3a3a;box-shadow:0 1px 0 #5e5e5e"></div>
<svg style="left:10px;top:402px;" width="18" height="18" viewBox="0 0 18 18"><path d="M1 16.5l2.5-9 7-4 5 5-4 7z" fill="#d0d0d0" stroke="#8a8a8a" stroke-width=".5"/><path d="M1 16.5l6.5-6.5" stroke="#555" stroke-width="1"/><circle cx="8" cy="9.5" r="1.3" fill="#444"/><path d="M11.5 2.5l2-2 4.5 4.5-2 2z" fill="#dadada"/></svg><svg style="left:27px;top:418px;" width="3.5" height="3.5" viewBox="0 0 3.5 3.5"><path d="M3.5 0v3.5h-3.5z" fill="#e4e4e4"/></svg>
<span class="t" style="left:12px;top:428px;font-size:19.5px;line-height:22px;font-family:'Liberation Serif',serif;color:#cfcfcf;transform:scaleX(1.08);-webkit-text-stroke:0;">T</span>
<svg style="left:27px;top:444px;" width="3.5" height="3.5" viewBox="0 0 3.5 3.5"><path d="M3.5 0v3.5h-3.5z" fill="#e4e4e4"/></svg>
<svg style="left:13px;top:454px;" width="12" height="18" viewBox="0 0 12 18"><path d="M1 .8v14l3.3-3 2.2 5 2.2-1-2.2-4.8h4.3z" fill="#222" stroke="#d0d0d0" stroke-width="1"/></svg><svg style="left:27px;top:470px;" width="3.5" height="3.5" viewBox="0 0 3.5 3.5"><path d="M3.5 0v3.5h-3.5z" fill="#e4e4e4"/></svg>
<svg style="left:9px;top:480px;" width="19" height="17" viewBox="0 0 19 17"><path d="M3 3.5C5 2.5 8 4 9.5 3C10 1 12 .5 13 2.5C13.5 4 14 4.5 16 4.5C18.5 4.3 19 7 17 8C15 9 12.5 9.5 12.5 10.5C13 12 15.5 13 14 15C12.5 16.5 10.5 15.5 9.5 13.5C8.5 12 7 12 6 13.5C4.5 15.5 2 16.5 .8 14.5C0 12.5 2.5 10.5 4 8.5C5 7 2.5 6.5 2.5 5C2.3 4.3 2.5 3.8 3 3.5Z" fill="#828282" stroke="#cfcfcf" stroke-width="1.2"/></svg><svg style="left:27px;top:496px;" width="3.5" height="3.5" viewBox="0 0 3.5 3.5"><path d="M3.5 0v3.5h-3.5z" fill="#e4e4e4"/></svg>
<div style="left:4px;top:503px;width:30px;height:1px;background:#3a3a3a;box-shadow:0 1px 0 #5e5e5e"></div>
<svg style="left:9px;top:509px;" width="18" height="18" viewBox="0 0 18 18"><path d="M5 17.5c-2-2.5-4-5-5-8 1.2-1.3 2.8-.5 4 1.5l-1.5-7c-.3-1.6 2-2 2.4-.5l1.2 4.5-.3-6.5c0-1.6 2.4-1.6 2.5 0l.4 6.5 1.3-5.8c.4-1.5 2.6-1 2.3.5l-1 6 2.2-3.7c.8-1.3 2.7-.3 2 1l-3 6.5c-.5 2-1 3.5-1.5 5z" fill="url(#gT)"/></svg><svg style="left:27px;top:525px;" width="3.5" height="3.5" viewBox="0 0 3.5 3.5"><path d="M3.5 0v3.5h-3.5z" fill="#e4e4e4"/></svg>
<svg style="left:11px;top:535px;" width="16" height="17" viewBox="0 0 16 17"><circle cx="6" cy="6" r="5" fill="#9a9a9a" stroke="#c4c4c4" stroke-width="1.8"/><path d="M9.8 10l4.5 5" stroke="#c4c4c4" stroke-width="3" stroke-linecap="round"/></svg>
<svg style="left:3px;top:559px;" width="11" height="12" viewBox="0 0 11 12"><rect x="3.5" y="4.5" width="7" height="7" fill="#c6c6c6"/><rect x=".6" y=".6" width="6.8" height="6.8" fill="#2a2a2a" stroke="#c6c6c6" stroke-width="1.2"/></svg>
<svg style="left:21px;top:558px;" width="12" height="12" viewBox="0 0 12 12"><path d="M3 .5l-3 3 3 3v-2.2h3.5c1 0 1.5.5 1.5 1.5v2h-2l3 3.2 3-3.2h-2.2v-2.5c0-1.8-1-2.8-2.8-2.8h-4z" fill="#d0d0d0"/></svg>
<div style="left:14px;top:586px;width:18.5px;height:18.5px;background:#000;border:1px solid #fff;box-shadow:0 0 0 1px #3a3a3a"></div>
<div style="left:3.6px;top:576px;width:19px;height:18.5px;background:#fff;box-shadow:0 0 0 1px #3a3a3a"></div>
<svg style="left:9px;top:613px;" width="17" height="14" viewBox="0 0 17 14"><rect x=".6" y=".6" width="15.8" height="12.8" fill="#3c3c3c" stroke="#d0d0d0" stroke-width="1.2"/><circle cx="8.5" cy="7" r="3.8" fill="none" stroke="#e8e8e8" stroke-width="1.1" stroke-dasharray="1 1.2"/></svg>
<svg style="left:9px;top:639px;" width="17" height="16" viewBox="0 0 17 16"><rect x="5.6" y=".6" width="10.8" height="9.8" fill="#777" stroke="#d0d0d0" stroke-width="1.2"/><rect x=".6" y="4.6" width="10.8" height="9.8" fill="#606060" stroke="#d0d0d0" stroke-width="1.2"/></svg><svg style="left:27px;top:654px;" width="3.5" height="3.5" viewBox="0 0 3.5 3.5"><path d="M3.5 0v3.5h-3.5z" fill="#e4e4e4"/></svg>
</div>
</body>
</html>
